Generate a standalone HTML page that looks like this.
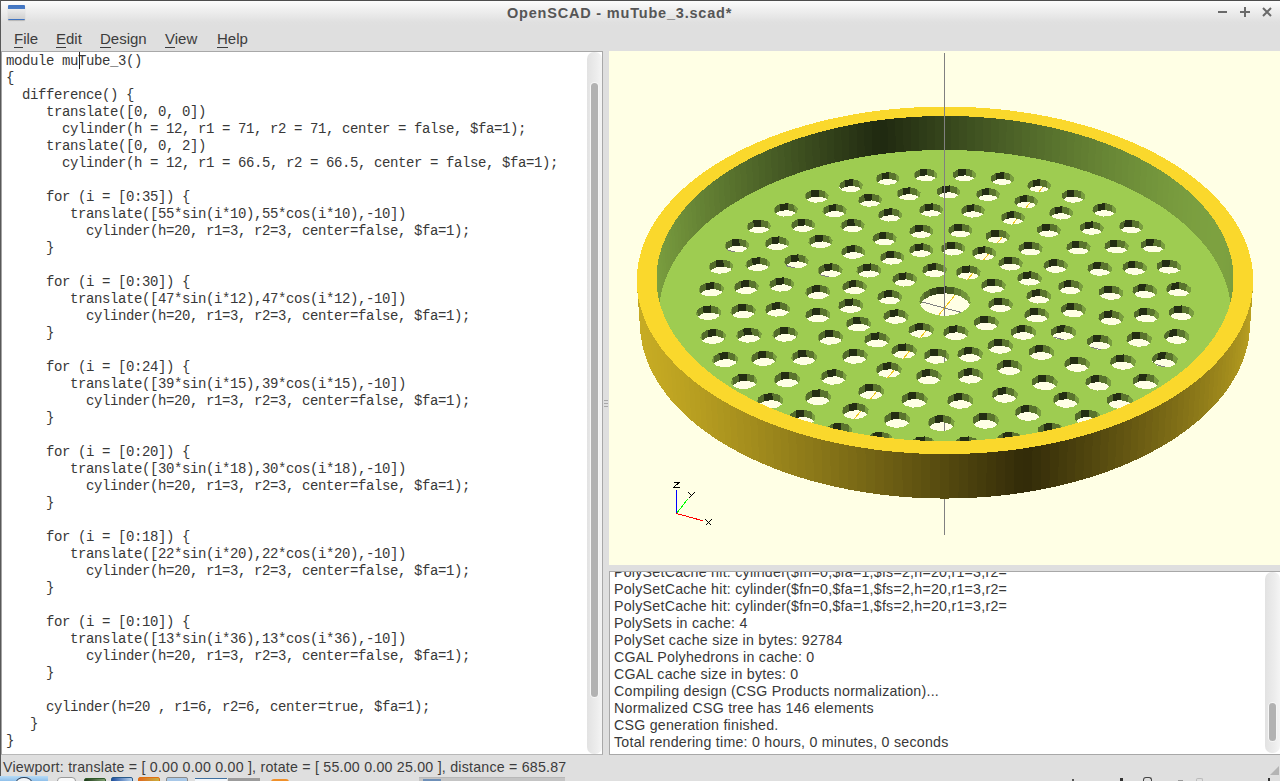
<!DOCTYPE html>
<html><head><meta charset="utf-8">
<style>
*{margin:0;padding:0;box-sizing:border-box}
html,body{width:1280px;height:781px;overflow:hidden;background:#dfdfdf;font-family:"Liberation Sans",sans-serif;position:relative}
.abs{position:absolute}
#title{left:0;top:0;width:1280px;height:26px;background:linear-gradient(#4e4e4e 0,#4e4e4e 1px,#fdfdfd 1px,#f2f2f2 8px,#e0e0e0 22px,#dfdfdf 26px)}
#ttext{left:507px;top:3px;font-weight:bold;font-size:14.5px;letter-spacing:0.8px;color:#565656;white-space:nowrap;line-height:20px}
#lborder{left:0;top:0;width:1px;height:776px;background:#585858}
.menu{top:30px;font-size:15px;color:#3c3c3c;line-height:18px;white-space:nowrap}
.menu u{text-decoration:none;border-bottom:1px solid #3c3c3c}
#editor{left:1px;top:51px;width:602px;height:704px;background:#fff;border-left:1px solid #a4a4a4;border-top:1px solid #a8a8a8;border-right:1px solid #a8a8a8;border-bottom:1px solid #b8b8b8;overflow:hidden}
#code{left:6px;top:3px;width:580px;font-family:"Liberation Mono",monospace;font-size:14px;letter-spacing:-0.4px;color:#383838}
.cl{position:absolute;left:0;white-space:pre;line-height:17px;height:17px}
#cursor{left:79px;top:52px;width:1px;height:17px;background:#222}
#escroll{left:587px;top:52px;width:15px;height:702px;background:linear-gradient(90deg,#e2e2e2,#ececec 60%,#f4f4f4);border-radius:7px}
#ethumb{left:591px;top:83px;width:7px;height:614px;background:#b2b2b2;border-radius:4px;box-shadow:0 0 0 1px #f6f6f6}
#view{left:609px;top:51px;width:671px;height:514px;background:#ffffe5;overflow:hidden}
#console{left:609px;top:571px;width:680px;height:184px;background:#fff;border:1px solid #a8a8a8;overflow:hidden}
#ctext{left:4px;top:-8px;font-size:14.2px;letter-spacing:0.25px;color:#383838}
.ln{position:absolute;left:0;white-space:nowrap;line-height:17px;height:17px}
#cscroll{left:1265px;top:572px;width:15px;height:181px;background:linear-gradient(90deg,#e2e2e2,#ececec 60%,#f4f4f4);border-radius:7px}
#cthumb{left:1269px;top:703px;width:7px;height:38px;background:#b2b2b2;border-radius:4px;box-shadow:0 0 0 1px #f6f6f6}
#status{left:3px;top:758px;font-size:14.2px;letter-spacing:0.23px;color:#3c3c3c;white-space:nowrap;line-height:18px}
#taskbar{left:0;top:776px;width:1280px;height:5px;background:#dfdfdf}
</style></head><body>
<div id="title" class="abs"></div>
<div class="abs" style="left:8px;top:5px;width:17px;height:15px;border-radius:1px;background:linear-gradient(#3f73c0 0,#4a7cc6 4px,#ececec 4px,#d0d0d0 14px,#3f73c0 14px);box-shadow:0 1px 1px rgba(0,0,0,.2)"></div>
<div id="ttext" class="abs">OpenSCAD - muTube_3.scad*</div>
<svg class="abs" style="left:1210px;top:0" width="70" height="26">
<g fill="#6a6a6a"><rect x="8" y="11" width="9" height="2"/><rect x="30" y="11" width="10" height="2"/><rect x="34" y="7" width="2" height="10"/></g>
<path d="M53 8L61 16M61 8L53 16" stroke="#6a6a6a" stroke-width="2"/>
</svg>
<div class="abs menu" style="left:14px"><u>F</u>ile</div>
<div class="abs menu" style="left:56px"><u>E</u>dit</div>
<div class="abs menu" style="left:100px"><u>D</u>esign</div>
<div class="abs menu" style="left:165px"><u>V</u>iew</div>
<div class="abs menu" style="left:217px"><u>H</u>elp</div>
<div id="editor" class="abs"></div>
<div id="code" class="abs" style="top:53px"><div class="cl" style="top:0px">module muTube_3()</div><div class="cl" style="top:17px">{</div><div class="cl" style="top:34px">  difference() {</div><div class="cl" style="top:51px">     translate([0, 0, 0])</div><div class="cl" style="top:68px">       cylinder(h = 12, r1 = 71, r2 = 71, center = false, $fa=1);</div><div class="cl" style="top:85px">     translate([0, 0, 2])</div><div class="cl" style="top:102px">       cylinder(h = 12, r1 = 66.5, r2 = 66.5, center = false, $fa=1);</div><div class="cl" style="top:119px"></div><div class="cl" style="top:136px">     for (i = [0:35]) {</div><div class="cl" style="top:153px">        translate([55*sin(i*10),55*cos(i*10),-10])</div><div class="cl" style="top:170px">          cylinder(h=20, r1=3, r2=3, center=false, $fa=1);</div><div class="cl" style="top:187px">     }</div><div class="cl" style="top:204px"></div><div class="cl" style="top:221px">     for (i = [0:30]) {</div><div class="cl" style="top:238px">        translate([47*sin(i*12),47*cos(i*12),-10])</div><div class="cl" style="top:255px">          cylinder(h=20, r1=3, r2=3, center=false, $fa=1);</div><div class="cl" style="top:272px">     }</div><div class="cl" style="top:289px"></div><div class="cl" style="top:306px">     for (i = [0:24]) {</div><div class="cl" style="top:323px">        translate([39*sin(i*15),39*cos(i*15),-10])</div><div class="cl" style="top:340px">          cylinder(h=20, r1=3, r2=3, center=false, $fa=1);</div><div class="cl" style="top:357px">     }</div><div class="cl" style="top:374px"></div><div class="cl" style="top:391px">     for (i = [0:20]) {</div><div class="cl" style="top:408px">        translate([30*sin(i*18),30*cos(i*18),-10])</div><div class="cl" style="top:425px">          cylinder(h=20, r1=3, r2=3, center=false, $fa=1);</div><div class="cl" style="top:442px">     }</div><div class="cl" style="top:459px"></div><div class="cl" style="top:476px">     for (i = [0:18]) {</div><div class="cl" style="top:493px">        translate([22*sin(i*20),22*cos(i*20),-10])</div><div class="cl" style="top:510px">          cylinder(h=20, r1=3, r2=3, center=false, $fa=1);</div><div class="cl" style="top:527px">     }</div><div class="cl" style="top:544px"></div><div class="cl" style="top:561px">     for (i = [0:10]) {</div><div class="cl" style="top:578px">        translate([13*sin(i*36),13*cos(i*36),-10])</div><div class="cl" style="top:595px">          cylinder(h=20, r1=3, r2=3, center=false, $fa=1);</div><div class="cl" style="top:612px">     }</div><div class="cl" style="top:629px"></div><div class="cl" style="top:646px">     cylinder(h=20 , r1=6, r2=6, center=true, $fa=1);</div><div class="cl" style="top:663px">   }</div><div class="cl" style="top:680px">}</div></div>
<div id="cursor" class="abs"></div>
<div id="escroll" class="abs"></div>
<div id="ethumb" class="abs"></div>
<div id="view" class="abs"><svg width="671" height="514" viewBox="0 0 671 514"><g shape-rendering="crispEdges"><line x1="78.28" y1="188.20" x2="611.17" y2="330.73" stroke="#808080" stroke-width="1"/><line x1="201.45" y1="421.89" x2="451.02" y2="114.91" stroke="#f2c81e" stroke-width="1"/><line x1="335.50" y1="484.49" x2="335.50" y2="257.00" stroke="#808080" stroke-width="1"/><polygon points="622.0,267.3 622.1,262.4 624.5,226.8 624.4,231.7" fill="#789b3e"/><polygon points="622.1,262.4 621.9,257.4 624.3,221.9 624.5,226.8" fill="#799c3e"/><polygon points="621.9,257.4 621.5,252.5 623.9,217.0 624.3,221.9" fill="#799d3f"/><polygon points="621.5,252.5 620.8,247.6 623.2,212.1 623.9,217.0" fill="#7a9e3f"/><polygon points="620.8,247.6 619.9,242.7 622.3,207.3 623.2,212.1" fill="#7b9f3f"/><polygon points="619.9,242.7 618.7,237.9 621.1,202.5 622.3,207.3" fill="#7b9f40"/><polygon points="618.7,237.9 617.3,233.1 619.6,197.7 621.1,202.5" fill="#7ca040"/><polygon points="617.3,233.1 615.6,228.3 617.9,193.0 619.6,197.7" fill="#7ca040"/><polygon points="615.6,228.3 613.7,223.6 616.0,188.3 617.9,193.0" fill="#7ca140"/><polygon points="613.7,223.6 611.5,218.9 613.8,183.7 616.0,188.3" fill="#7da140"/><polygon points="611.5,218.9 609.1,214.2 611.4,179.1 613.8,183.7" fill="#7da140"/><polygon points="609.1,214.2 606.5,209.6 608.8,174.5 611.4,179.1" fill="#7da140"/><polygon points="606.5,209.6 603.7,205.1 605.9,170.0 608.8,174.5" fill="#7da140"/><polygon points="603.7,205.1 600.6,200.6 602.8,165.6 605.9,170.0" fill="#7da140"/><polygon points="600.6,200.6 597.3,196.2 599.5,161.3 602.8,165.6" fill="#7ca140"/><polygon points="597.3,196.2 593.8,191.9 595.9,157.0 599.5,161.3" fill="#7ca040"/><polygon points="593.8,191.9 590.1,187.6 592.2,152.7 595.9,157.0" fill="#7ca040"/><polygon points="590.1,187.6 586.2,183.4 588.2,148.6 592.2,152.7" fill="#7b9f40"/><polygon points="586.2,183.4 582.0,179.3 584.0,144.5 588.2,148.6" fill="#7b9f3f"/><polygon points="582.0,179.3 577.7,175.3 579.7,140.5 584.0,144.5" fill="#7a9e3f"/><polygon points="577.7,175.3 573.2,171.3 575.1,136.6 579.7,140.5" fill="#799d3f"/><polygon points="573.2,171.3 568.5,167.4 570.4,132.7 575.1,136.6" fill="#799c3e"/><polygon points="568.5,167.4 563.6,163.6 565.5,129.0 570.4,132.7" fill="#789b3e"/><polygon points="563.6,163.6 558.6,159.9 560.4,125.3 565.5,129.0" fill="#779a3d"/><polygon points="558.6,159.9 553.3,156.3 555.1,121.7 560.4,125.3" fill="#76983d"/><polygon points="553.3,156.3 547.9,152.8 549.6,118.2 555.1,121.7" fill="#75973c"/><polygon points="547.9,152.8 542.3,149.4 544.0,114.9 549.6,118.2" fill="#73953c"/><polygon points="542.3,149.4 536.6,146.1 538.2,111.6 544.0,114.9" fill="#72943b"/><polygon points="536.6,146.1 530.7,142.9 532.3,108.4 538.2,111.6" fill="#71923a"/><polygon points="530.7,142.9 524.7,139.7 526.2,105.3 532.3,108.4" fill="#6f9039"/><polygon points="524.7,139.7 518.6,136.7 520.0,102.3 526.2,105.3" fill="#6e8e39"/><polygon points="518.6,136.7 512.3,133.8 513.7,99.4 520.0,102.3" fill="#6c8c38"/><polygon points="512.3,133.8 505.8,131.0 507.2,96.6 513.7,99.4" fill="#6b8a37"/><polygon points="505.8,131.0 499.3,128.3 500.6,94.0 507.2,96.6" fill="#698836"/><polygon points="499.3,128.3 492.6,125.7 493.8,91.4 500.6,94.0" fill="#678635"/><polygon points="492.6,125.7 485.8,123.3 487.0,89.0 493.8,91.4" fill="#668334"/><polygon points="485.8,123.3 478.9,120.9 480.0,86.6 487.0,89.0" fill="#648133"/><polygon points="478.9,120.9 471.9,118.7 472.9,84.4 480.0,86.6" fill="#627e32"/><polygon points="471.9,118.7 464.7,116.5 465.8,82.3 472.9,84.4" fill="#607c31"/><polygon points="464.7,116.5 457.5,114.5 458.5,80.3 465.8,82.3" fill="#5e7930"/><polygon points="457.5,114.5 450.3,112.6 451.2,78.5 458.5,80.3" fill="#5c762f"/><polygon points="450.3,112.6 442.9,110.9 443.7,76.7 451.2,78.5" fill="#59742e"/><polygon points="442.9,110.9 435.4,109.2 436.2,75.1 443.7,76.7" fill="#57712d"/><polygon points="435.4,109.2 427.9,107.7 428.6,73.6 436.2,75.1" fill="#556e2c"/><polygon points="427.9,107.7 420.3,106.3 421.0,72.2 428.6,73.6" fill="#536b2b"/><polygon points="420.3,106.3 412.7,105.0 413.3,70.9 421.0,72.2" fill="#506829"/><polygon points="412.7,105.0 405.0,103.8 405.5,69.7 413.3,70.9" fill="#4e6428"/><polygon points="405.0,103.8 397.2,102.8 397.7,68.7 405.5,69.7" fill="#4b6127"/><polygon points="397.2,102.8 389.4,101.9 389.8,67.8 397.7,68.7" fill="#495e26"/><polygon points="389.4,101.9 381.6,101.1 382.0,67.0 389.8,67.8" fill="#465b24"/><polygon points="381.6,101.1 373.7,100.4 374.0,66.4 382.0,67.0" fill="#445723"/><polygon points="373.7,100.4 365.8,99.9 366.1,65.8 374.0,66.4" fill="#415422"/><polygon points="365.8,99.9 357.9,99.5 358.1,65.4 366.1,65.8" fill="#3e5120"/><polygon points="357.9,99.5 350.0,99.2 350.1,65.1 358.1,65.4" fill="#3c4d1f"/><polygon points="350.0,99.2 342.1,99.0 342.1,65.0 350.1,65.1" fill="#394a1d"/><polygon points="342.1,99.0 334.1,99.0 334.1,64.9 342.1,65.0" fill="#36461c"/><polygon points="334.1,99.0 326.2,99.1 326.1,65.0 334.1,64.9" fill="#34431b"/><polygon points="326.2,99.1 318.3,99.3 318.1,65.3 326.1,65.0" fill="#313f19"/><polygon points="318.3,99.3 310.3,99.6 310.1,65.6 318.1,65.3" fill="#2e3c18"/><polygon points="310.3,99.6 302.4,100.1 302.2,66.1 310.1,65.6" fill="#2b3816"/><polygon points="302.4,100.1 294.6,100.7 294.2,66.7 302.2,66.1" fill="#293415"/><polygon points="294.6,100.7 286.7,101.4 286.3,67.4 294.2,66.7" fill="#263113"/><polygon points="286.7,101.4 278.9,102.3 278.4,68.2 286.3,67.4" fill="#232d12"/><polygon points="278.9,102.3 271.1,103.2 270.6,69.2 278.4,68.2" fill="#202a11"/><polygon points="271.1,103.2 263.4,104.3 262.8,70.3 270.6,69.2" fill="#212b11"/><polygon points="263.4,104.3 255.7,105.6 255.1,71.5 262.8,70.3" fill="#242f13"/><polygon points="255.7,105.6 248.1,106.9 247.4,72.8 255.1,71.5" fill="#273214"/><polygon points="248.1,106.9 240.5,108.4 239.8,74.3 247.4,72.8" fill="#2a3616"/><polygon points="240.5,108.4 233.0,110.0 232.2,75.8 239.8,74.3" fill="#2d3a17"/><polygon points="233.0,110.0 225.6,111.7 224.8,77.5 232.2,75.8" fill="#2f3d18"/><polygon points="225.6,111.7 218.3,113.5 217.4,79.3 224.8,77.5" fill="#32411a"/><polygon points="218.3,113.5 211.0,115.4 210.1,81.3 217.4,79.3" fill="#35441b"/><polygon points="211.0,115.4 203.9,117.5 202.8,83.3 210.1,81.3" fill="#38481d"/><polygon points="203.9,117.5 196.8,119.7 195.7,85.5 202.8,83.3" fill="#3a4b1e"/><polygon points="196.8,119.7 189.9,122.0 188.7,87.7 195.7,85.5" fill="#3d4f1f"/><polygon points="189.9,122.0 183.0,124.4 181.8,90.1 188.7,87.7" fill="#405221"/><polygon points="183.0,124.4 176.3,126.9 175.0,92.6 181.8,90.1" fill="#425622"/><polygon points="176.3,126.9 169.6,129.6 168.3,95.2 175.0,92.6" fill="#455924"/><polygon points="169.6,129.6 163.1,132.3 161.8,97.9 168.3,95.2" fill="#475c25"/><polygon points="163.1,132.3 156.8,135.2 155.3,100.8 161.8,97.9" fill="#4a6026"/><polygon points="156.8,135.2 150.5,138.1 149.0,103.7 155.3,100.8" fill="#4c6327"/><polygon points="150.5,138.1 144.4,141.2 142.9,106.7 149.0,103.7" fill="#4f6629"/><polygon points="144.4,141.2 138.5,144.4 136.9,109.9 142.9,106.7" fill="#51692a"/><polygon points="138.5,144.4 132.7,147.6 131.0,113.1 136.9,109.9" fill="#546c2b"/><polygon points="132.7,147.6 127.0,151.0 125.3,116.4 131.0,113.1" fill="#566f2c"/><polygon points="127.0,151.0 121.5,154.5 119.8,119.9 125.3,116.4" fill="#58722d"/><polygon points="121.5,154.5 116.2,158.0 114.4,123.4 119.8,119.9" fill="#5a752f"/><polygon points="116.2,158.0 111.0,161.7 109.2,127.0 114.4,123.4" fill="#5c7830"/><polygon points="111.0,161.7 106.1,165.4 104.2,130.7 109.2,127.0" fill="#5f7a31"/><polygon points="106.1,165.4 101.3,169.3 99.3,134.5 104.2,130.7" fill="#617d32"/><polygon points="101.3,169.3 96.6,173.2 94.7,138.4 99.3,134.5" fill="#637f33"/><polygon points="96.6,173.2 92.2,177.2 90.2,142.4 94.7,138.4" fill="#648234"/><polygon points="92.2,177.2 88.0,181.3 86.0,146.4 90.2,142.4" fill="#668435"/><polygon points="88.0,181.3 84.0,185.4 81.9,150.5 86.0,146.4" fill="#688736"/><polygon points="84.0,185.4 80.1,189.6 78.0,154.7 81.9,150.5" fill="#6a8937"/><polygon points="80.1,189.6 76.5,193.9 74.4,159.0 78.0,154.7" fill="#6c8b37"/><polygon points="76.5,193.9 73.1,198.3 70.9,163.3 74.4,159.0" fill="#6d8d38"/><polygon points="73.1,198.3 69.9,202.8 67.7,167.7 70.9,163.3" fill="#6f8f39"/><polygon points="69.9,202.8 67.0,207.2 64.7,172.2 67.7,167.7" fill="#70913a"/><polygon points="67.0,207.2 64.2,211.8 62.0,176.7 64.7,172.2" fill="#71933b"/><polygon points="64.2,211.8 61.7,216.4 59.4,181.2 62.0,176.7" fill="#73943b"/><polygon points="61.7,216.4 59.4,221.1 57.1,185.9 59.4,181.2" fill="#74963c"/><polygon points="59.4,221.1 57.4,225.8 55.1,190.5 57.1,185.9" fill="#75973c"/><polygon points="57.4,225.8 55.6,230.5 53.2,195.2 55.1,190.5" fill="#76993d"/><polygon points="55.6,230.5 54.0,235.3 51.7,200.0 53.2,195.2" fill="#779a3d"/><polygon points="54.0,235.3 52.7,240.2 50.3,204.8 51.7,200.0" fill="#789b3e"/><polygon points="52.7,240.2 51.6,245.0 49.2,209.6 50.3,204.8" fill="#799c3e"/><polygon points="51.6,245.0 50.8,249.9 48.4,214.4 49.2,209.6" fill="#7a9d3f"/><polygon points="50.8,249.9 50.3,254.8 47.9,219.3 48.4,214.4" fill="#7a9e3f"/><polygon points="50.3,254.8 50.0,259.7 47.5,224.2 47.9,219.3" fill="#7b9f3f"/><polygon points="50.0,259.7 49.9,264.7 47.5,229.1 47.5,224.2" fill="#7ba040"/><polygon points="49.9,264.7 50.1,269.6 47.7,234.0 47.5,229.1" fill="#7ca040"/><path fill-rule="evenodd" fill="#9ecc51" d="M603.5 321.3 606.5 316.5 609.2 311.7 611.7 306.8 613.9 301.9 615.9 297.0 617.6 292.1 619.0 287.1 620.1 282.2 621.0 277.2 621.6 272.3 622.0 267.3 622.1 262.4 621.9 257.4 621.5 252.5 620.8 247.6 619.9 242.7 618.7 237.9 617.3 233.1 615.6 228.3 613.7 223.6 611.5 218.9 609.1 214.2 606.5 209.6 603.7 205.1 600.6 200.6 597.3 196.2 593.8 191.9 590.1 187.6 586.2 183.4 582.0 179.3 577.7 175.3 573.2 171.3 568.5 167.4 563.6 163.6 558.6 159.9 553.3 156.3 547.9 152.8 542.3 149.4 536.6 146.1 530.7 142.9 524.7 139.7 518.6 136.7 512.3 133.8 505.8 131.0 499.3 128.3 492.6 125.7 485.8 123.3 478.9 120.9 471.9 118.7 464.7 116.5 457.5 114.5 450.3 112.6 442.9 110.9 435.4 109.2 427.9 107.7 420.3 106.3 412.7 105.0 405.0 103.8 397.2 102.8 389.4 101.9 381.6 101.1 373.7 100.4 365.8 99.9 357.9 99.5 350.0 99.2 342.1 99.0 334.1 99.0 326.2 99.1 318.3 99.3 310.3 99.6 302.4 100.1 294.6 100.7 286.7 101.4 278.9 102.3 271.1 103.2 263.4 104.3 255.7 105.6 248.1 106.9 240.5 108.4 233.0 110.0 225.6 111.7 218.3 113.5 211.0 115.4 203.9 117.5 196.8 119.7 189.9 122.0 183.0 124.4 176.3 126.9 169.6 129.6 163.1 132.3 156.8 135.2 150.5 138.1 144.4 141.2 138.5 144.4 132.7 147.6 127.0 151.0 121.5 154.5 116.2 158.0 111.0 161.7 106.1 165.4 101.3 169.3 96.6 173.2 92.2 177.2 88.0 181.3 84.0 185.4 80.1 189.6 76.5 193.9 73.1 198.3 69.9 202.8 67.0 207.2 64.2 211.8 61.7 216.4 59.4 221.1 57.4 225.8 55.6 230.5 54.0 235.3 52.7 240.2 51.6 245.0 50.8 249.9 50.3 254.8 50.0 259.7 49.9 264.7 50.1 269.6 50.6 274.6 51.4 279.6 52.4 284.5 53.7 289.5 55.2 294.4 57.0 299.3 59.1 304.2 61.4 309.1 64.0 313.9 66.9 318.7 70.1 323.5 73.5 328.2 77.1 332.9 81.1 337.5 85.2 342.0 89.7 346.5 94.4 350.9 99.3 355.2 104.5 359.4 109.9 363.6 115.6 367.6 121.5 371.6 127.6 375.4 134.0 379.2 140.5 382.8 147.3 386.3 154.3 389.7 161.4 393.0 168.8 396.1 176.3 399.2 184.0 402.0 191.9 404.8 200.0 407.3 208.2 409.8 216.5 412.1 225.0 414.2 233.6 416.2 242.3 418.0 251.1 419.7 260.0 421.2 269.0 422.5 278.1 423.7 287.2 424.7 296.4 425.5 305.7 426.2 314.9 426.6 324.2 426.9 333.5 427.1 342.9 427.0 352.2 426.8 361.4 426.4 370.7 425.9 379.9 425.1 389.1 424.2 398.2 423.2 407.2 421.9 416.2 420.5 425.1 418.9 433.8 417.2 442.5 415.3 451.0 413.2 459.4 411.0 467.7 408.7 475.8 406.1 483.8 403.5 491.6 400.7 499.3 397.7 506.7 394.7 514.0 391.5 521.1 388.1 527.9 384.7 534.6 381.1 541.1 377.4 547.3 373.6 553.3 369.7 559.1 365.7 564.7 361.6 570.0 357.4 575.0 353.2 579.9 348.8 584.4 344.4 588.8 339.9 592.8 335.3 596.6 330.7 600.2 326.0ZM441.2 137.4 441.9 133.4 438.1 129.9 431.2 128.2 423.9 128.9 418.9 131.9 418.2 135.9 422.0 139.5 428.9 141.2 436.3 140.4ZM475.6 148.0 476.3 143.9 472.4 140.4 465.4 138.6 458.1 139.4 453.1 142.4 452.5 146.4 456.3 150.0 463.3 151.8 470.7 151.0ZM506.8 161.7 507.3 157.6 503.3 154.0 496.3 152.2 488.9 153.0 484.0 156.0 483.4 160.2 487.4 163.8 494.4 165.6 501.8 164.8ZM533.7 178.3 534.2 174.2 530.1 170.5 523.1 168.7 515.6 169.5 510.7 172.6 510.1 176.8 514.2 180.5 521.3 182.3 528.8 181.4ZM555.7 197.5 556.1 193.2 552.0 189.5 544.8 187.7 537.3 188.5 532.3 191.6 531.8 195.9 536.0 199.6 543.2 201.5 550.7 200.6ZM571.8 218.7 572.3 214.3 568.0 210.5 560.8 208.6 553.2 209.5 548.2 212.7 547.7 217.0 551.9 220.9 559.3 222.7 566.9 221.9ZM581.6 241.4 582.0 236.9 577.7 233.0 570.4 231.1 562.7 232.0 557.7 235.2 557.2 239.7 561.5 243.6 568.9 245.5 576.6 244.7ZM584.4 264.9 584.9 260.4 580.5 256.4 573.0 254.4 565.3 255.3 560.3 258.7 559.8 263.2 564.1 267.2 571.6 269.2 579.4 268.3ZM580.0 288.7 580.5 284.0 576.1 279.9 568.5 277.9 560.7 278.8 555.6 282.3 555.1 286.9 559.4 291.1 567.0 293.1 574.9 292.2ZM568.2 311.9 568.7 307.1 564.3 302.9 556.7 300.9 548.8 301.8 543.6 305.3 543.0 310.1 547.4 314.3 555.1 316.3 563.0 315.4ZM549.2 333.7 549.8 328.8 545.3 324.5 537.7 322.5 529.7 323.4 524.4 327.0 523.8 331.9 528.2 336.2 535.9 338.3 543.9 337.3ZM523.4 353.4 524.0 348.4 519.6 344.1 511.9 342.0 503.8 342.9 498.4 346.5 497.8 351.5 502.2 355.9 509.9 358.0 518.1 357.1ZM491.6 370.2 492.2 365.1 487.8 360.7 480.1 358.6 471.9 359.5 466.5 363.2 465.7 368.3 470.1 372.7 477.9 374.9 486.1 373.9ZM454.6 383.4 455.3 378.3 451.0 373.8 443.3 371.7 435.0 372.7 429.5 376.4 428.6 381.5 432.9 386.0 440.7 388.2 449.0 387.2ZM413.8 392.6 414.6 387.4 410.4 382.9 402.6 380.8 394.3 381.7 388.7 385.5 387.7 390.6 392.0 395.2 399.8 397.4 408.1 396.4ZM370.5 397.3 371.5 392.1 367.3 387.6 359.6 385.4 351.3 386.4 345.5 390.2 344.5 395.3 348.6 399.9 356.4 402.1 364.8 401.1ZM326.5 397.3 327.5 392.1 323.4 387.6 315.8 385.4 307.4 386.4 301.6 390.2 300.5 395.3 304.5 399.9 312.2 402.1 320.6 401.1ZM283.2 392.6 284.3 387.4 280.3 382.9 272.7 380.8 264.4 381.7 258.5 385.5 257.3 390.6 261.2 395.2 268.9 397.4 277.3 396.4ZM242.2 383.4 243.5 378.3 239.6 373.8 232.1 371.7 223.7 372.7 217.8 376.4 216.5 381.5 220.3 386.0 227.9 388.2 236.3 387.2ZM205.1 370.2 206.4 365.1 202.7 360.7 195.2 358.6 186.9 359.5 180.9 363.2 179.5 368.3 183.3 372.7 190.8 374.9 199.1 373.9ZM173.1 353.4 174.4 348.4 170.7 344.1 163.4 342.0 155.1 342.9 149.1 346.5 147.7 351.5 151.4 355.9 158.8 358.0 167.1 357.1ZM147.0 333.7 148.5 328.8 144.9 324.5 137.6 322.5 129.4 323.4 123.4 327.0 121.9 331.9 125.5 336.2 132.8 338.3 141.1 337.3ZM127.8 311.9 129.3 307.1 125.7 302.9 118.5 300.9 110.4 301.8 104.5 305.3 103.0 310.1 106.5 314.3 113.7 316.3 121.8 315.4ZM115.7 288.7 117.2 284.0 113.7 279.9 106.7 277.9 98.6 278.8 92.7 282.3 91.2 286.9 94.7 291.1 101.8 293.1 109.8 292.2ZM111.1 264.9 112.5 260.4 109.1 256.4 102.1 254.4 94.2 255.3 88.3 258.7 86.8 263.2 90.2 267.2 97.2 269.2 105.2 268.3ZM113.6 241.4 115.1 236.9 111.7 233.0 104.8 231.1 96.9 232.0 91.1 235.2 89.6 239.7 93.0 243.6 100.0 245.5 107.9 244.7ZM123.1 218.7 124.5 214.3 121.2 210.5 114.3 208.6 106.6 209.5 100.9 212.7 99.4 217.0 102.8 220.9 109.7 222.7 117.4 221.9ZM139.1 197.5 140.4 193.2 137.1 189.5 130.3 187.7 122.6 188.5 117.0 191.6 115.6 195.9 118.9 199.6 125.8 201.5 133.5 200.6ZM160.8 178.3 162.1 174.2 158.7 170.5 152.0 168.7 144.4 169.5 138.9 172.6 137.5 176.8 140.9 180.5 147.7 182.3 155.3 181.4ZM187.6 161.7 188.8 157.6 185.4 154.0 178.7 152.2 171.2 153.0 165.7 156.0 164.5 160.2 167.8 163.8 174.6 165.6 182.1 164.8ZM218.5 148.0 219.7 143.9 216.3 140.4 209.5 138.6 202.1 139.4 196.8 142.4 195.6 146.4 199.0 150.0 205.7 151.8 213.2 151.0ZM252.8 137.4 253.9 133.4 250.4 129.9 243.7 128.2 236.3 128.9 231.1 131.9 229.9 135.9 233.4 139.5 240.1 141.2 247.6 140.4ZM289.5 130.3 290.5 126.3 287.0 122.8 280.3 121.1 272.9 121.9 267.7 124.8 266.7 128.8 270.2 132.3 276.9 134.0 284.3 133.2ZM327.6 126.7 328.6 122.7 325.0 119.2 318.2 117.5 310.9 118.3 305.8 121.2 304.8 125.2 308.4 128.7 315.2 130.4 322.5 129.6ZM366.3 126.7 367.1 122.7 363.5 119.2 356.7 117.5 349.4 118.3 344.3 121.2 343.4 125.2 347.1 128.7 353.9 130.4 361.2 129.6ZM404.5 130.3 405.2 126.3 401.5 122.8 394.7 121.1 387.4 121.9 382.4 124.8 381.6 128.8 385.3 132.3 392.1 134.0 399.4 133.2ZM428.3 153.4 429.0 149.3 425.2 145.8 418.3 144.0 410.9 144.8 405.9 147.8 405.1 151.9 408.9 155.5 415.8 157.3 423.2 156.5ZM463.4 164.8 464.1 160.6 460.2 157.0 453.2 155.3 445.8 156.0 440.8 159.1 440.1 163.2 444.0 166.9 451.0 168.6 458.4 167.8ZM494.2 180.0 494.8 175.8 490.8 172.1 483.7 170.3 476.3 171.1 471.3 174.2 470.6 178.4 474.6 182.1 481.7 183.9 489.2 183.1ZM519.2 198.5 519.8 194.3 515.7 190.5 508.5 188.7 501.0 189.5 496.0 192.7 495.4 196.9 499.5 200.7 506.7 202.5 514.2 201.7ZM537.4 219.8 537.9 215.5 533.8 211.6 526.5 209.8 518.9 210.6 513.9 213.8 513.3 218.2 517.5 222.1 524.8 223.9 532.4 223.1ZM547.7 243.1 548.2 238.6 544.0 234.7 536.7 232.8 529.0 233.6 523.9 236.9 523.4 241.4 527.6 245.3 535.0 247.2 542.7 246.4ZM549.5 267.3 550.0 262.7 545.7 258.7 538.3 256.7 530.5 257.6 525.4 261.0 524.8 265.5 529.1 269.6 536.6 271.5 544.4 270.7ZM542.3 291.4 542.8 286.7 538.5 282.6 531.0 280.6 523.2 281.5 518.0 285.0 517.4 289.6 521.7 293.8 529.2 295.8 537.1 294.9ZM526.2 314.4 526.8 309.6 522.5 305.4 514.9 303.4 506.9 304.3 501.7 307.8 501.0 312.6 505.3 316.8 513.0 318.9 520.9 317.9ZM501.7 335.0 502.3 330.2 498.0 325.9 490.3 323.8 482.3 324.7 476.9 328.3 476.3 333.2 480.6 337.5 488.2 339.6 496.3 338.7ZM469.6 352.3 470.3 347.4 466.0 343.0 458.4 340.9 450.3 341.9 444.8 345.5 444.0 350.5 448.3 354.8 456.0 357.0 464.1 356.0ZM431.5 365.3 432.3 360.3 428.1 355.9 420.4 353.7 412.2 354.7 406.6 358.4 405.8 363.4 410.0 367.8 417.7 370.0 425.9 369.0ZM389.1 373.2 390.0 368.1 385.9 363.7 378.2 361.5 370.0 362.5 364.3 366.2 363.4 371.3 367.5 375.7 375.2 377.9 383.5 376.9ZM344.6 375.5 345.6 370.5 341.6 366.0 333.9 363.9 325.7 364.8 319.9 368.5 318.9 373.6 322.9 378.1 330.6 380.3 338.9 379.3ZM300.3 372.2 301.4 367.2 297.4 362.7 289.9 360.6 281.6 361.6 275.8 365.3 274.6 370.3 278.6 374.8 286.2 376.9 294.5 376.0ZM258.4 363.5 259.6 358.4 255.7 354.0 248.2 351.9 240.0 352.9 234.1 356.6 232.9 361.6 236.7 366.0 244.2 368.1 252.5 367.2ZM221.0 349.7 222.3 344.8 218.5 340.4 211.1 338.3 202.9 339.3 197.0 342.9 195.7 347.9 199.4 352.2 206.9 354.3 215.1 353.4ZM189.9 331.8 191.3 326.9 187.6 322.7 180.3 320.6 172.1 321.5 166.2 325.1 164.8 330.0 168.5 334.3 175.8 336.4 184.0 335.4ZM166.5 310.7 167.9 305.9 164.3 301.7 157.0 299.7 149.0 300.6 143.1 304.1 141.7 308.9 145.2 313.1 152.5 315.1 160.6 314.2ZM151.6 287.4 153.0 282.8 149.4 278.7 142.3 276.7 134.3 277.6 128.5 281.0 127.0 285.7 130.6 289.8 137.7 291.8 145.8 290.9ZM145.6 263.2 147.0 258.6 143.5 254.6 136.5 252.7 128.6 253.6 122.8 256.9 121.4 261.5 124.8 265.5 131.9 267.5 139.9 266.6ZM148.6 239.1 150.0 234.6 146.5 230.7 139.6 228.9 131.7 229.7 126.0 233.0 124.6 237.4 128.1 241.3 135.0 243.3 142.9 242.4ZM160.0 216.1 161.4 211.8 157.9 208.0 151.0 206.1 143.3 207.0 137.7 210.1 136.3 214.5 139.7 218.3 146.6 220.2 154.4 219.4ZM179.2 195.2 180.5 191.0 177.0 187.2 170.2 185.4 162.6 186.2 157.0 189.4 155.7 193.6 159.1 197.4 166.0 199.2 173.7 198.4ZM205.1 177.2 206.3 173.0 202.8 169.3 196.0 167.6 188.5 168.4 183.0 171.4 181.8 175.6 185.2 179.3 192.0 181.1 199.6 180.3ZM236.5 162.6 237.6 158.5 234.1 154.9 227.4 153.1 219.9 153.9 214.5 156.9 213.3 161.0 216.8 164.7 223.6 166.4 231.1 165.6ZM272.1 152.0 273.2 147.9 269.6 144.3 262.9 142.6 255.4 143.3 250.2 146.3 249.1 150.4 252.6 154.0 259.4 155.8 266.8 155.0ZM310.6 145.6 311.5 141.5 307.9 138.0 301.2 136.3 293.8 137.0 288.6 140.0 287.6 144.1 291.1 147.6 297.9 149.4 305.4 148.6ZM350.4 143.7 351.3 139.7 347.6 136.1 340.8 134.4 333.4 135.2 328.3 138.1 327.4 142.2 331.0 145.7 337.9 147.5 345.3 146.7ZM390.1 146.3 390.9 142.3 387.2 138.7 380.3 137.0 373.0 137.8 367.9 140.8 367.0 144.8 370.8 148.4 377.6 150.1 385.0 149.3ZM415.1 169.7 415.9 165.6 412.0 161.9 405.1 160.1 397.6 160.9 392.5 164.0 391.7 168.1 395.5 171.8 402.5 173.6 410.0 172.8ZM451.2 182.2 451.9 178.0 448.0 174.3 440.9 172.5 433.5 173.3 428.4 176.4 427.7 180.6 431.6 184.3 438.6 186.1 446.2 185.3ZM481.0 199.5 481.6 195.2 477.6 191.5 470.5 189.7 463.0 190.5 457.9 193.6 457.2 197.9 461.2 201.7 468.4 203.5 475.9 202.7ZM502.4 220.8 503.0 216.4 498.9 212.6 491.7 210.7 484.1 211.6 479.0 214.8 478.4 219.2 482.4 223.0 489.7 224.9 497.3 224.0ZM513.8 244.8 514.4 240.3 510.2 236.4 502.9 234.5 495.2 235.3 490.1 238.6 489.5 243.1 493.6 247.0 501.0 248.9 508.7 248.1ZM514.1 269.9 514.7 265.3 510.4 261.3 503.0 259.3 495.3 260.2 490.1 263.6 489.4 268.1 493.6 272.2 501.1 274.2 508.9 273.3ZM502.8 294.4 503.4 289.7 499.1 285.6 491.7 283.6 483.8 284.5 478.5 288.0 477.8 292.7 482.1 296.8 489.6 298.8 497.5 297.9ZM480.3 316.6 481.0 311.8 476.7 307.6 469.2 305.6 461.2 306.5 455.9 310.0 455.1 314.8 459.4 319.1 466.9 321.1 475.0 320.2ZM448.0 334.8 448.8 329.9 444.6 325.6 437.0 323.5 429.0 324.5 423.5 328.0 422.7 332.9 426.9 337.2 434.5 339.3 442.6 338.4ZM408.1 347.3 409.0 342.4 404.8 338.1 397.2 336.0 389.1 336.9 383.6 340.5 382.7 345.5 386.8 349.8 394.4 351.9 402.6 351.0ZM363.6 353.3 364.5 348.3 360.4 344.0 352.9 341.9 344.7 342.8 339.1 346.4 338.0 351.4 342.1 355.8 349.7 357.9 357.9 357.0ZM317.8 352.1 318.8 347.1 314.8 342.8 307.3 340.7 299.1 341.6 293.4 345.2 292.3 350.2 296.3 354.6 303.8 356.7 312.0 355.7ZM274.3 343.8 275.4 338.9 271.5 334.6 264.1 332.5 255.9 333.5 250.2 337.1 248.9 342.0 252.8 346.3 260.3 348.4 268.5 347.5ZM236.4 329.3 237.7 324.4 233.9 320.2 226.5 318.1 218.4 319.0 212.6 322.6 211.3 327.4 215.1 331.7 222.5 333.8 230.6 332.9ZM207.0 309.6 208.3 304.8 204.6 300.7 197.3 298.6 189.3 299.5 183.5 303.0 182.1 307.8 185.8 312.0 193.1 314.1 201.2 313.1ZM187.9 286.4 189.2 281.8 185.6 277.7 178.5 275.7 170.5 276.6 164.7 280.0 163.3 284.7 166.9 288.8 174.1 290.8 182.1 289.9ZM180.2 261.5 181.5 256.9 177.9 252.9 170.9 251.0 163.0 251.9 157.3 255.2 155.9 259.8 159.4 263.8 166.5 265.7 174.5 264.8ZM184.0 236.6 185.2 232.1 181.7 228.2 174.7 226.3 167.0 227.2 161.3 230.5 160.0 234.9 163.5 238.8 170.5 240.7 178.3 239.9ZM198.6 213.3 199.8 209.0 196.3 205.2 189.4 203.4 181.7 204.2 176.2 207.4 174.9 211.7 178.3 215.5 185.3 217.4 193.0 216.6ZM222.8 193.2 223.9 189.0 220.4 185.3 213.6 183.5 206.0 184.3 200.5 187.4 199.3 191.6 202.8 195.4 209.7 197.2 217.3 196.4ZM254.7 177.4 255.8 173.2 252.3 169.6 245.4 167.8 237.9 168.6 232.5 171.7 231.4 175.8 234.9 179.5 241.8 181.3 249.3 180.5ZM292.3 166.8 293.3 162.6 289.7 159.0 282.9 157.2 275.4 158.0 270.1 161.1 269.1 165.2 272.6 168.9 279.5 170.6 287.0 169.8ZM333.2 161.8 334.1 157.7 330.5 154.1 323.6 152.3 316.2 153.1 311.0 156.1 310.0 160.2 313.6 163.9 320.5 165.7 328.0 164.9ZM375.0 162.8 375.8 158.7 372.1 155.1 365.2 153.3 357.7 154.1 352.6 157.1 351.7 161.2 355.4 164.9 362.4 166.7 369.8 165.9ZM400.0 188.3 400.8 184.1 397.0 180.4 390.0 178.6 382.5 179.4 377.3 182.5 376.5 186.7 380.3 190.5 387.3 192.3 394.9 191.5ZM433.0 200.5 433.7 196.2 429.8 192.5 422.7 190.7 415.2 191.5 410.0 194.6 409.2 198.9 413.1 202.7 420.3 204.5 427.9 203.7ZM458.2 217.9 458.9 213.6 454.9 209.7 447.7 207.9 440.1 208.7 435.0 211.9 434.3 216.3 438.2 220.1 445.4 222.0 453.1 221.2ZM473.2 239.1 473.9 234.7 469.8 230.7 462.5 228.9 454.9 229.7 449.7 233.0 449.0 237.4 453.0 241.4 460.3 243.3 468.0 242.4ZM476.2 262.1 476.8 257.6 472.7 253.6 465.4 251.6 457.6 252.5 452.4 255.8 451.6 260.4 455.8 264.4 463.1 266.4 470.9 265.5ZM466.4 284.7 467.1 280.1 463.0 276.0 455.6 274.0 447.7 274.9 442.4 278.3 441.6 283.0 445.8 287.1 453.2 289.1 461.1 288.2ZM444.6 304.7 445.3 299.9 441.2 295.8 433.7 293.7 425.8 294.6 420.4 298.1 419.6 302.9 423.7 307.1 431.2 309.1 439.2 308.2ZM412.6 319.7 413.4 314.9 409.3 310.7 401.8 308.6 393.8 309.5 388.3 313.1 387.4 317.9 391.5 322.1 399.0 324.2 407.1 323.3ZM373.6 328.1 374.5 323.3 370.4 319.0 363.0 317.0 354.9 317.9 349.3 321.5 348.4 326.3 352.4 330.6 359.9 332.7 368.0 331.7ZM331.8 329.0 332.8 324.2 328.9 319.9 321.4 317.8 313.3 318.8 307.7 322.3 306.6 327.2 310.6 331.5 318.0 333.5 326.2 332.6ZM291.8 322.2 292.9 317.4 289.0 313.1 281.6 311.1 273.6 312.0 267.9 315.5 266.7 320.4 270.6 324.6 278.0 326.7 286.1 325.8ZM257.7 308.5 258.9 303.7 255.1 299.6 247.8 297.5 239.8 298.4 234.1 301.9 232.9 306.7 236.6 310.9 243.9 312.9 252.0 312.0ZM233.2 289.5 234.4 284.8 230.7 280.7 223.5 278.7 215.5 279.6 209.8 283.0 208.5 287.7 212.2 291.8 219.5 293.8 227.5 292.9ZM220.4 267.3 221.6 262.7 218.0 258.7 210.9 256.7 203.0 257.6 197.3 261.0 196.0 265.5 199.6 269.6 206.8 271.5 214.7 270.6ZM220.3 244.1 221.5 239.7 217.9 235.7 210.9 233.8 203.1 234.7 197.5 238.0 196.2 242.4 199.8 246.4 206.8 248.3 214.7 247.4ZM232.5 222.4 233.7 218.0 230.1 214.2 223.1 212.3 215.4 213.1 209.8 216.3 208.6 220.7 212.2 224.6 219.2 226.5 226.9 225.6ZM255.4 204.0 256.5 199.7 252.9 195.9 246.0 194.1 238.4 194.9 232.9 198.1 231.8 202.4 235.3 206.2 242.3 208.0 250.0 207.2ZM286.8 190.5 287.8 186.3 284.2 182.6 277.2 180.8 269.7 181.6 264.3 184.7 263.2 188.9 266.8 192.7 273.8 194.5 281.4 193.7ZM323.5 183.1 324.5 178.9 320.8 175.2 313.9 173.5 306.4 174.3 301.1 177.3 300.1 181.6 303.7 185.3 310.7 187.1 318.3 186.3ZM362.4 182.4 363.3 178.2 359.6 174.5 352.6 172.7 345.1 173.5 339.9 176.6 338.9 180.8 342.7 184.5 349.7 186.3 357.2 185.5ZM386.4 205.2 387.2 200.9 383.4 197.1 376.3 195.3 368.8 196.1 363.5 199.3 362.6 203.6 366.5 207.4 373.5 209.2 381.2 208.4ZM413.1 215.5 413.8 211.2 409.9 207.4 402.8 205.5 395.2 206.4 390.0 209.5 389.1 213.9 393.0 217.7 400.2 219.6 407.8 218.8ZM432.2 230.5 433.0 226.1 429.0 222.2 421.8 220.3 414.2 221.2 408.9 224.4 408.1 228.8 412.1 232.7 419.3 234.6 427.0 233.7ZM441.6 248.4 442.3 243.9 438.3 239.9 431.0 238.0 423.3 238.9 418.0 242.2 417.2 246.7 421.2 250.7 428.5 252.6 436.3 251.7ZM439.7 267.2 440.4 262.6 436.3 258.6 429.0 256.7 421.2 257.5 415.9 260.9 415.1 265.5 419.1 269.5 426.5 271.5 434.3 270.6ZM426.4 284.6 427.2 279.9 423.1 275.9 415.8 273.9 407.9 274.8 402.5 278.2 401.7 282.8 405.7 286.9 413.2 288.9 421.1 288.0ZM403.3 298.4 404.2 293.7 400.1 289.5 392.7 287.5 384.8 288.4 379.3 291.9 378.4 296.6 382.5 300.8 389.9 302.8 397.9 301.9ZM373.1 306.7 374.0 301.9 370.0 297.8 362.6 295.8 354.6 296.7 349.1 300.2 348.1 304.9 352.1 309.1 359.5 311.1 367.6 310.2ZM339.5 308.4 340.5 303.7 336.6 299.5 329.2 297.5 321.2 298.4 315.6 301.9 314.6 306.6 318.5 310.8 325.9 312.9 334.0 311.9ZM307.1 303.3 308.1 298.6 304.2 294.4 296.9 292.4 288.9 293.3 283.3 296.8 282.2 301.5 286.0 305.7 293.4 307.7 301.4 306.8ZM279.8 292.1 280.9 287.4 277.1 283.3 269.9 281.3 261.9 282.2 256.3 285.6 255.1 290.3 258.9 294.4 266.2 296.4 274.2 295.5ZM261.2 276.2 262.4 271.6 258.6 267.5 251.4 265.6 243.5 266.5 237.9 269.8 236.7 274.5 240.4 278.5 247.6 280.5 255.6 279.6ZM253.4 257.8 254.5 253.3 250.8 249.3 243.7 247.4 235.9 248.2 230.3 251.6 229.1 256.1 232.7 260.1 239.9 262.0 247.8 261.2ZM256.9 239.2 258.1 234.7 254.4 230.8 247.4 228.9 239.6 229.8 234.1 233.0 232.9 237.5 236.5 241.4 243.6 243.3 251.4 242.5ZM271.3 222.5 272.4 218.1 268.7 214.3 261.7 212.4 254.0 213.3 248.5 216.5 247.4 220.9 251.0 224.7 258.0 226.6 265.8 225.8ZM294.4 209.7 295.4 205.4 291.7 201.6 284.7 199.8 277.1 200.6 271.7 203.8 270.6 208.1 274.3 211.9 281.3 213.7 289.0 212.9ZM323.5 202.1 324.5 197.8 320.8 194.1 313.8 192.3 306.2 193.1 300.9 196.2 299.8 200.5 303.5 204.3 310.6 206.1 318.2 205.3ZM355.4 200.6 356.3 196.3 352.5 192.5 345.5 190.7 337.9 191.5 332.7 194.7 331.7 199.0 335.5 202.7 342.5 204.6 350.1 203.7ZM370.8 224.5 371.7 220.1 367.8 216.3 360.7 214.4 353.0 215.3 347.7 218.5 346.8 222.9 350.6 226.7 357.8 228.6 365.5 227.8ZM396.1 237.7 396.9 233.3 393.0 229.4 385.8 227.5 378.1 228.3 372.8 231.6 371.9 236.0 375.8 240.0 383.0 241.9 390.8 241.0ZM403.2 257.0 404.0 252.5 400.1 248.5 392.8 246.6 385.0 247.4 379.7 250.8 378.8 255.3 382.8 259.3 390.1 261.2 397.9 260.3ZM389.1 275.1 389.9 270.5 385.9 266.5 378.6 264.5 370.8 265.4 365.4 268.8 364.5 273.4 368.4 277.4 375.8 279.4 383.7 278.5ZM358.7 285.0 359.6 280.3 355.7 276.2 348.3 274.2 340.5 275.1 335.0 278.5 334.0 283.2 337.9 287.3 345.2 289.3 353.2 288.4ZM323.9 282.5 324.9 277.8 321.0 273.8 313.8 271.8 305.9 272.7 300.3 276.1 299.3 280.7 303.1 284.8 310.4 286.8 318.4 285.9ZM298.6 268.7 299.6 264.1 295.8 260.1 288.6 258.2 280.8 259.0 275.2 262.4 274.1 267.0 277.9 271.0 285.1 273.0 293.0 272.1ZM292.3 249.2 293.4 244.7 289.6 240.8 282.5 238.9 274.7 239.7 269.2 243.0 268.1 247.5 271.8 251.5 279.0 253.4 286.8 252.5ZM307.1 231.5 308.2 227.1 304.4 223.2 297.3 221.3 289.6 222.2 284.2 225.4 283.1 229.8 286.8 233.7 294.0 235.6 301.7 234.8ZM337.0 222.2 338.0 217.8 334.2 214.0 327.1 212.1 319.4 212.9 314.1 216.2 313.1 220.5 316.8 224.4 323.9 226.3 331.7 225.4ZM359.4 256.2 361.6 251.5 361.0 246.7 357.8 242.2 352.2 238.6 344.9 236.3 336.6 235.4 328.3 236.1 320.8 238.2 314.9 241.7 311.3 246.0 310.3 250.9 312.1 255.6 316.6 259.7 323.2 262.8 331.1 264.5 339.7 264.6 347.8 263.2 354.6 260.2Z"/><polygon points="437.9,136.7 439.7,138.3 441.2,137.4 441.9,133.4 438.1,129.9" fill="#799d3f"/><polygon points="431.1,135.0 437.9,136.7 438.1,129.9 431.2,128.2" fill="#5a742e"/><polygon points="423.8,135.7 431.1,135.0 431.2,128.2 423.9,128.9" fill="#242e13"/><polygon points="423.8,135.7 423.9,128.9 418.9,131.9 418.9,136.5 420.3,137.8" fill="#536b2b"/><polygon points="418.2,135.9 418.9,136.5 418.9,131.9" fill="#77993d"/><polygon points="472.1,147.2 474.1,148.9 475.6,148.0 476.3,143.9 472.4,140.4" fill="#799d3f"/><polygon points="465.2,145.5 472.1,147.2 472.4,140.4 465.4,138.6" fill="#5a742e"/><polygon points="457.9,146.2 465.2,145.5 465.4,138.6 458.1,139.4" fill="#242e13"/><polygon points="457.9,146.2 458.1,139.4 453.1,142.4 453.0,147.0 454.5,148.3" fill="#536b2b"/><polygon points="452.5,146.4 453.0,147.0 453.1,142.4" fill="#77993d"/><polygon points="503.1,160.8 505.1,162.7 506.8,161.7 507.3,157.6 503.3,154.0" fill="#799d3f"/><polygon points="496.1,159.1 503.1,160.8 503.3,154.0 496.3,152.2" fill="#5a742e"/><polygon points="488.7,159.9 496.1,159.1 496.3,152.2 488.9,153.0" fill="#242e13"/><polygon points="488.7,159.9 488.9,153.0 484.0,156.0 483.9,160.6 485.3,161.9" fill="#536b2b"/><polygon points="483.4,160.2 483.9,160.6 484.0,156.0" fill="#77993d"/><polygon points="529.8,177.4 532.1,179.4 533.7,178.3 534.2,174.2 530.1,170.5" fill="#799d3f"/><polygon points="522.7,175.6 529.8,177.4 530.1,170.5 523.1,168.7" fill="#5a742e"/><polygon points="515.3,176.4 522.7,175.6 523.1,168.7 515.6,169.5" fill="#242e13"/><polygon points="515.3,176.4 515.6,169.5 510.7,172.6 510.5,177.1 512.0,178.5" fill="#536b2b"/><polygon points="510.1,176.8 510.5,177.1 510.7,172.6" fill="#77993d"/><polygon points="551.6,196.4 554.0,198.5 555.7,197.5 556.1,193.2 552.0,189.5" fill="#799d3f"/><polygon points="544.4,194.6 551.6,196.4 552.0,189.5 544.8,187.7" fill="#5a742e"/><polygon points="537.0,195.4 544.4,194.6 544.8,187.7 537.3,188.5" fill="#242e13"/><polygon points="537.0,195.4 537.3,188.5 532.3,191.6 532.1,196.2 533.6,197.5" fill="#536b2b"/><polygon points="531.8,195.9 532.1,196.2 532.3,191.6" fill="#77993d"/><polygon points="567.7,217.4 570.2,219.7 571.8,218.7 572.3,214.3 568.0,210.5" fill="#799d3f"/><polygon points="560.4,215.6 567.7,217.4 568.0,210.5 560.8,208.6" fill="#5a742e"/><polygon points="552.9,216.4 560.4,215.6 560.8,208.6 553.2,209.5" fill="#242e13"/><polygon points="552.9,216.4 553.2,209.5 548.2,212.7 548.0,217.3 549.5,218.6" fill="#536b2b"/><polygon points="547.7,217.0 548.0,217.3 548.2,212.7" fill="#77993d"/><polygon points="577.3,240.0 580.0,242.4 581.6,241.4 582.0,236.9 577.7,233.0" fill="#799d3f"/><polygon points="570.0,238.1 577.3,240.0 577.7,233.0 570.4,231.1" fill="#5a742e"/><polygon points="562.3,238.9 570.0,238.1 570.4,231.1 562.7,232.0" fill="#242e13"/><polygon points="562.3,238.9 562.7,232.0 557.7,235.2 557.5,239.9 558.9,241.2" fill="#536b2b"/><polygon points="557.2,239.7 557.5,239.9 557.7,235.2" fill="#77993d"/><polygon points="580.1,263.4 582.9,266.0 584.4,264.9 584.9,260.4 580.5,256.4" fill="#799d3f"/><polygon points="572.7,261.5 580.1,263.4 580.5,256.4 573.0,254.4" fill="#5a742e"/><polygon points="564.9,262.3 572.7,261.5 573.0,254.4 565.3,255.3" fill="#242e13"/><polygon points="564.9,262.3 565.3,255.3 560.3,258.7 560.0,263.4 561.4,264.7" fill="#536b2b"/><polygon points="559.8,263.2 560.0,263.4 560.3,258.7" fill="#77993d"/><polygon points="575.7,287.0 578.5,289.7 580.0,288.7 580.5,284.0 576.1,279.9" fill="#799d3f"/><polygon points="568.1,285.0 575.7,287.0 576.1,279.9 568.5,277.9" fill="#5a742e"/><polygon points="560.3,285.9 568.1,285.0 568.5,277.9 560.7,278.8" fill="#242e13"/><polygon points="560.3,285.9 560.7,278.8 555.6,282.3 555.3,287.2 556.6,288.4" fill="#536b2b"/><polygon points="555.1,286.9 555.3,287.2 555.6,282.3" fill="#77993d"/><polygon points="563.9,310.0 566.8,312.8 568.2,311.9 568.7,307.1 564.3,302.9" fill="#799d3f"/><polygon points="556.3,308.0 563.9,310.0 564.3,302.9 556.7,300.9" fill="#5a742e"/><polygon points="548.4,308.9 556.3,308.0 556.7,300.9 548.8,301.8" fill="#242e13"/><polygon points="548.4,308.9 548.8,301.8 543.6,305.3 543.3,310.3 544.5,311.5" fill="#536b2b"/><polygon points="543.0,310.1 543.3,310.3 543.6,305.3" fill="#77993d"/><polygon points="545.0,331.7 547.9,334.6 549.2,333.7 549.8,328.8 545.3,324.5" fill="#799d3f"/><polygon points="537.3,329.6 545.0,331.7 545.3,324.5 537.7,322.5" fill="#5a742e"/><polygon points="529.3,330.6 537.3,329.6 537.7,322.5 529.7,323.4" fill="#242e13"/><polygon points="529.3,330.6 529.7,323.4 524.4,327.0 524.1,332.2 525.3,333.3" fill="#536b2b"/><polygon points="523.8,331.9 524.1,332.2 524.4,327.0" fill="#77993d"/><polygon points="519.3,351.2 522.3,354.2 523.4,353.4 524.0,348.4 519.6,344.1" fill="#799d3f"/><polygon points="511.6,349.1 519.3,351.2 519.6,344.1 511.9,342.0" fill="#5a742e"/><polygon points="503.5,350.1 511.6,349.1 511.9,342.0 503.8,342.9" fill="#242e13"/><polygon points="503.5,350.1 503.8,342.9 498.4,346.5 498.2,351.9 499.3,353.0" fill="#536b2b"/><polygon points="497.8,351.5 498.2,351.9 498.4,346.5" fill="#77993d"/><polygon points="487.6,367.9 490.5,370.9 491.6,370.2 492.2,365.1 487.8,360.7" fill="#799d3f"/><polygon points="479.9,365.8 487.6,367.9 487.8,360.7 480.1,358.6" fill="#5a742e"/><polygon points="471.7,366.8 479.9,365.8 480.1,358.6 471.9,359.5" fill="#242e13"/><polygon points="471.7,366.8 471.9,359.5 466.5,363.2 466.3,368.8 467.2,369.8" fill="#536b2b"/><polygon points="465.7,368.3 466.3,368.8 466.5,363.2" fill="#77993d"/><polygon points="450.8,381.1 453.7,384.1 454.6,383.4 455.3,378.3 451.0,373.8" fill="#799d3f"/><polygon points="443.1,378.9 450.8,381.1 451.0,373.8 443.3,371.7" fill="#5a742e"/><polygon points="434.9,379.9 443.1,378.9 443.3,371.7 435.0,372.7" fill="#242e13"/><polygon points="434.9,379.9 435.0,372.7 429.5,376.4 429.3,382.2 430.1,383.1" fill="#536b2b"/><polygon points="428.6,381.5 429.3,382.2 429.5,376.4" fill="#77993d"/><polygon points="410.2,390.2 413.0,393.1 413.8,392.6 414.6,387.4 410.4,382.9" fill="#799d3f"/><polygon points="402.5,388.0 410.2,390.2 410.4,382.9 402.6,380.8" fill="#5a742e"/><polygon points="394.2,389.0 402.5,388.0 402.6,380.8 394.3,381.7" fill="#242e13"/><polygon points="394.2,389.0 394.3,381.7 388.7,385.5 388.6,391.5 389.3,392.3" fill="#536b2b"/><polygon points="387.7,390.6 388.6,391.5 388.7,385.5" fill="#77993d"/><polygon points="367.2,394.8 369.9,397.7 370.5,397.3 371.5,392.1 367.3,387.6" fill="#799d3f"/><polygon points="359.5,392.6 367.2,394.8 367.3,387.6 359.6,385.4" fill="#5a742e"/><polygon points="351.2,393.6 359.5,392.6 359.6,385.4 351.3,386.4" fill="#242e13"/><polygon points="351.2,393.6 351.3,386.4 345.5,390.2 345.5,396.4 346.1,397.0" fill="#536b2b"/><polygon points="344.5,395.3 345.5,396.4 345.5,390.2" fill="#77993d"/><polygon points="323.4,394.8 326.0,397.6 326.5,397.3 327.5,392.1 323.4,387.6" fill="#799d3f"/><polygon points="315.8,392.6 323.4,394.8 323.4,387.6 315.8,385.4" fill="#5a742e"/><polygon points="307.5,393.6 315.8,392.6 315.8,385.4 307.4,386.4" fill="#242e13"/><polygon points="307.5,393.6 307.4,386.4 301.6,390.2 301.6,396.6 302.1,397.1" fill="#536b2b"/><polygon points="300.5,395.3 301.6,396.6 301.6,390.2" fill="#77993d"/><polygon points="280.4,390.2 282.8,392.8 283.2,392.6 284.3,387.4 280.3,382.9" fill="#799d3f"/><polygon points="272.8,388.0 280.4,390.2 280.3,382.9 272.7,380.8" fill="#5a742e"/><polygon points="264.5,389.0 272.8,388.0 272.7,380.8 264.4,381.7" fill="#242e13"/><polygon points="264.5,389.0 264.4,381.7 258.5,385.5 258.6,392.2 258.9,392.6" fill="#536b2b"/><polygon points="257.3,390.6 258.6,392.2 258.5,385.5" fill="#77993d"/><polygon points="239.8,381.1 242.0,383.6 242.2,383.4 243.5,378.3 239.6,373.8" fill="#799d3f"/><polygon points="232.2,378.9 239.8,381.1 239.6,373.8 232.1,371.7" fill="#5a742e"/><polygon points="223.9,379.9 232.2,378.9 232.1,371.7 223.7,372.7" fill="#242e13"/><polygon points="223.9,379.9 223.7,372.7 217.8,376.4 218.0,383.3 218.2,383.5" fill="#536b2b"/><polygon points="216.5,381.5 218.0,383.3 217.8,376.4" fill="#77993d"/><polygon points="202.9,367.9 204.9,370.3 205.1,370.2 206.4,365.1 202.7,360.7" fill="#799d3f"/><polygon points="195.4,365.8 202.9,367.9 202.7,360.7 195.2,358.6" fill="#5a742e"/><polygon points="187.2,366.8 195.4,365.8 195.2,358.6 186.9,359.5" fill="#242e13"/><polygon points="187.2,366.8 186.9,359.5 180.9,363.2 181.2,370.2 181.3,370.4" fill="#536b2b"/><polygon points="179.5,368.3 181.2,370.2 180.9,363.2" fill="#77993d"/><polygon points="171.0,351.2 172.9,353.5 173.1,353.4 174.4,348.4 170.7,344.1" fill="#799d3f"/><polygon points="163.7,349.1 171.0,351.2 170.7,344.1 163.4,342.0" fill="#5a742e"/><polygon points="155.5,350.1 163.7,349.1 163.4,342.0 155.1,342.9" fill="#242e13"/><polygon points="155.5,350.1 155.1,342.9 149.1,346.5 149.5,353.6 149.5,353.7" fill="#536b2b"/><polygon points="147.7,351.5 149.5,353.6 149.1,346.5" fill="#77993d"/><polygon points="145.2,331.7 146.9,333.8 147.0,333.7 148.5,328.8 144.9,324.5" fill="#799d3f"/><polygon points="137.9,329.6 145.2,331.7 144.9,324.5 137.6,322.5" fill="#5a742e"/><polygon points="129.8,330.6 137.9,329.6 137.6,322.5 129.4,323.4" fill="#242e13"/><polygon points="129.8,330.6 129.4,323.4 123.4,327.0 123.8,334.1 123.8,334.1" fill="#536b2b"/><polygon points="121.9,331.9 123.8,334.1 123.4,327.0" fill="#77993d"/><polygon points="126.1,310.0 127.7,311.9 127.8,311.9 129.3,307.1 125.7,302.9" fill="#799d3f"/><polygon points="118.9,308.0 126.1,310.0 125.7,302.9 118.5,300.9" fill="#5a742e"/><polygon points="110.8,308.9 118.9,308.0 118.5,300.9 110.4,301.8" fill="#242e13"/><polygon points="110.8,308.9 110.4,301.8 104.5,305.3 104.9,312.4 104.9,312.4" fill="#536b2b"/><polygon points="103.0,310.1 104.9,312.4 104.5,305.3" fill="#77993d"/><polygon points="114.1,287.0 115.6,288.8 115.7,288.7 117.2,284.0 113.7,279.9" fill="#799d3f"/><polygon points="107.0,285.0 114.1,287.0 113.7,279.9 106.7,277.9" fill="#5a742e"/><polygon points="99.0,285.9 107.0,285.0 106.7,277.9 98.6,278.8" fill="#242e13"/><polygon points="99.0,285.9 98.6,278.8 92.7,282.3 93.1,289.2 93.2,289.3" fill="#536b2b"/><polygon points="91.2,286.9 93.1,289.2 92.7,282.3" fill="#77993d"/><polygon points="109.5,263.4 110.9,265.0 111.1,264.9 112.5,260.4 109.1,256.4" fill="#799d3f"/><polygon points="102.5,261.5 109.5,263.4 109.1,256.4 102.1,254.4" fill="#5a742e"/><polygon points="94.6,262.3 102.5,261.5 102.1,254.4 94.2,255.3" fill="#242e13"/><polygon points="94.6,262.3 94.2,255.3 88.3,258.7 88.7,265.5 88.8,265.6" fill="#536b2b"/><polygon points="86.8,263.2 88.7,265.5 88.3,258.7" fill="#77993d"/><polygon points="112.1,240.0 113.4,241.5 113.6,241.4 115.1,236.9 111.7,233.0" fill="#799d3f"/><polygon points="105.1,238.1 112.1,240.0 111.7,233.0 104.8,231.1" fill="#5a742e"/><polygon points="97.3,238.9 105.1,238.1 104.8,231.1 96.9,232.0" fill="#242e13"/><polygon points="97.3,238.9 96.9,232.0 91.1,235.2 91.5,241.9 91.7,242.1" fill="#536b2b"/><polygon points="89.6,239.7 91.5,241.9 91.1,235.2" fill="#77993d"/><polygon points="121.5,217.4 122.8,218.9 123.1,218.7 124.5,214.3 121.2,210.5" fill="#799d3f"/><polygon points="114.7,215.6 121.5,217.4 121.2,210.5 114.3,208.6" fill="#5a742e"/><polygon points="106.9,216.4 114.7,215.6 114.3,208.6 106.6,209.5" fill="#242e13"/><polygon points="106.9,216.4 106.6,209.5 100.9,212.7 101.2,219.1 101.5,219.5" fill="#536b2b"/><polygon points="99.4,217.0 101.2,219.1 100.9,212.7" fill="#77993d"/><polygon points="137.4,196.4 138.6,197.7 139.1,197.5 140.4,193.2 137.1,189.5" fill="#799d3f"/><polygon points="130.6,194.6 137.4,196.4 137.1,189.5 130.3,187.7" fill="#5a742e"/><polygon points="122.9,195.4 130.6,194.6 130.3,187.7 122.6,188.5" fill="#242e13"/><polygon points="122.9,195.4 122.6,188.5 117.0,191.6 117.3,197.8 117.7,198.3" fill="#536b2b"/><polygon points="115.6,195.9 117.3,197.8 117.0,191.6" fill="#77993d"/><polygon points="159.0,177.4 160.2,178.7 160.8,178.3 162.1,174.2 158.7,170.5" fill="#799d3f"/><polygon points="152.3,175.6 159.0,177.4 158.7,170.5 152.0,168.7" fill="#5a742e"/><polygon points="144.7,176.4 152.3,175.6 152.0,168.7 144.4,169.5" fill="#242e13"/><polygon points="144.7,176.4 144.4,169.5 138.9,172.6 139.1,178.6 139.7,179.2" fill="#536b2b"/><polygon points="137.5,176.8 139.1,178.6 138.9,172.6" fill="#77993d"/><polygon points="185.6,160.8 186.8,162.1 187.6,161.7 188.8,157.6 185.4,154.0" fill="#799d3f"/><polygon points="178.9,159.1 185.6,160.8 185.4,154.0 178.7,152.2" fill="#5a742e"/><polygon points="171.4,159.9 178.9,159.1 178.7,152.2 171.2,153.0" fill="#242e13"/><polygon points="171.4,159.9 171.2,153.0 165.7,156.0 166.0,161.8 166.7,162.5" fill="#536b2b"/><polygon points="164.5,160.2 166.0,161.8 165.7,156.0" fill="#77993d"/><polygon points="216.4,147.2 217.7,148.5 218.5,148.0 219.7,143.9 216.3,140.4" fill="#799d3f"/><polygon points="209.7,145.5 216.4,147.2 216.3,140.4 209.5,138.6" fill="#5a742e"/><polygon points="202.3,146.2 209.7,145.5 209.5,138.6 202.1,139.4" fill="#242e13"/><polygon points="202.3,146.2 202.1,139.4 196.8,142.4 196.9,147.9 197.8,148.8" fill="#536b2b"/><polygon points="195.6,146.4 196.9,147.9 196.8,142.4" fill="#77993d"/><polygon points="250.6,136.7 251.8,138.0 252.8,137.4 253.9,133.4 250.4,129.9" fill="#799d3f"/><polygon points="243.9,135.0 250.6,136.7 250.4,129.9 243.7,128.2" fill="#5a742e"/><polygon points="236.5,135.7 243.9,135.0 243.7,128.2 236.3,128.9" fill="#242e13"/><polygon points="236.5,135.7 236.3,128.9 231.1,131.9 231.2,137.2 232.2,138.2" fill="#536b2b"/><polygon points="229.9,135.9 231.2,137.2 231.1,131.9" fill="#77993d"/><polygon points="287.0,129.6 288.4,130.9 289.5,130.3 290.5,126.3 287.0,122.8" fill="#799d3f"/><polygon points="280.4,127.9 287.0,129.6 287.0,122.8 280.3,121.1" fill="#5a742e"/><polygon points="273.0,128.6 280.4,127.9 280.3,121.1 272.9,121.9" fill="#242e13"/><polygon points="273.0,128.6 272.9,121.9 267.7,124.8 267.8,129.9 268.9,131.0" fill="#536b2b"/><polygon points="266.7,128.8 267.8,129.9 267.7,124.8" fill="#77993d"/><polygon points="325.0,126.0 326.4,127.4 327.6,126.7 328.6,122.7 325.0,119.2" fill="#799d3f"/><polygon points="318.3,124.3 325.0,126.0 325.0,119.2 318.2,117.5" fill="#5a742e"/><polygon points="311.0,125.1 318.3,124.3 318.2,117.5 310.9,118.3" fill="#242e13"/><polygon points="311.0,125.1 310.9,118.3 305.8,121.2 305.8,126.2 307.0,127.3" fill="#536b2b"/><polygon points="304.8,125.2 305.8,126.2 305.8,121.2" fill="#77993d"/><polygon points="363.4,126.0 364.9,127.4 366.3,126.7 367.1,122.7 363.5,119.2" fill="#799d3f"/><polygon points="356.7,124.3 363.4,126.0 363.5,119.2 356.7,117.5" fill="#5a742e"/><polygon points="349.4,125.1 356.7,124.3 356.7,117.5 349.4,118.3" fill="#242e13"/><polygon points="349.4,125.1 349.4,118.3 344.3,121.2 344.3,126.0 345.6,127.2" fill="#536b2b"/><polygon points="343.4,125.2 344.3,126.0 344.3,121.2" fill="#77993d"/><polygon points="401.4,129.6 403.0,131.1 404.5,130.3 405.2,126.3 401.5,122.8" fill="#799d3f"/><polygon points="394.6,127.9 401.4,129.6 401.5,122.8 394.7,121.1" fill="#5a742e"/><polygon points="387.3,128.6 394.6,127.9 394.7,121.1 387.4,121.9" fill="#242e13"/><polygon points="387.3,128.6 387.4,121.9 382.4,124.8 382.3,129.5 383.7,130.8" fill="#536b2b"/><polygon points="381.6,128.8 382.3,129.5 382.4,124.8" fill="#77993d"/><polygon points="425.0,152.6 426.8,154.3 428.3,153.4 429.0,149.3 425.2,145.8" fill="#799d3f"/><polygon points="418.1,150.9 425.0,152.6 425.2,145.8 418.3,144.0" fill="#5a742e"/><polygon points="410.8,151.6 418.1,150.9 418.3,144.0 410.9,144.8" fill="#242e13"/><polygon points="410.8,151.6 410.9,144.8 405.9,147.8 405.8,152.6 407.1,153.8" fill="#536b2b"/><polygon points="405.1,151.9 405.8,152.6 405.9,147.8" fill="#77993d"/><polygon points="460.0,163.9 461.9,165.7 463.4,164.8 464.1,160.6 460.2,157.0" fill="#799d3f"/><polygon points="453.0,162.1 460.0,163.9 460.2,157.0 453.2,155.3" fill="#5a742e"/><polygon points="445.6,162.9 453.0,162.1 453.2,155.3 445.8,156.0" fill="#242e13"/><polygon points="445.6,162.9 445.8,156.0 440.8,159.1 440.7,163.8 442.0,165.1" fill="#536b2b"/><polygon points="440.1,163.2 440.7,163.8 440.8,159.1" fill="#77993d"/><polygon points="490.5,179.0 492.6,180.9 494.2,180.0 494.8,175.8 490.8,172.1" fill="#799d3f"/><polygon points="483.5,177.2 490.5,179.0 490.8,172.1 483.7,170.3" fill="#5a742e"/><polygon points="476.0,178.0 483.5,177.2 483.7,170.3 476.3,171.1" fill="#242e13"/><polygon points="476.0,178.0 476.3,171.1 471.3,174.2 471.1,178.8 472.5,180.2" fill="#536b2b"/><polygon points="470.6,178.4 471.1,178.8 471.3,174.2" fill="#77993d"/><polygon points="515.4,197.4 517.7,199.5 519.2,198.5 519.8,194.3 515.7,190.5" fill="#799d3f"/><polygon points="508.3,195.6 515.4,197.4 515.7,190.5 508.5,188.7" fill="#5a742e"/><polygon points="500.8,196.4 508.3,195.6 508.5,188.7 501.0,189.5" fill="#242e13"/><polygon points="500.8,196.4 501.0,189.5 496.0,192.7 495.8,197.3 497.3,198.6" fill="#536b2b"/><polygon points="495.4,196.9 495.8,197.3 496.0,192.7" fill="#77993d"/><polygon points="533.4,218.6 535.9,220.8 537.4,219.8 537.9,215.5 533.8,211.6" fill="#799d3f"/><polygon points="526.2,216.7 533.4,218.6 533.8,211.6 526.5,209.8" fill="#5a742e"/><polygon points="518.6,217.6 526.2,216.7 526.5,209.8 518.9,210.6" fill="#242e13"/><polygon points="518.6,217.6 518.9,210.6 513.9,213.8 513.7,218.5 515.1,219.8" fill="#536b2b"/><polygon points="513.3,218.2 513.7,218.5 513.9,213.8" fill="#77993d"/><polygon points="543.7,241.7 546.2,244.1 547.7,243.1 548.2,238.6 544.0,234.7" fill="#799d3f"/><polygon points="536.3,239.8 543.7,241.7 544.0,234.7 536.7,232.8" fill="#5a742e"/><polygon points="528.7,240.6 536.3,239.8 536.7,232.8 529.0,233.6" fill="#242e13"/><polygon points="528.7,240.6 529.0,233.6 523.9,236.9 523.7,241.7 525.1,243.0" fill="#536b2b"/><polygon points="523.4,241.4 523.7,241.7 523.9,236.9" fill="#77993d"/><polygon points="545.4,265.7 548.0,268.2 549.5,267.3 550.0,262.7 545.7,258.7" fill="#799d3f"/><polygon points="537.9,263.8 545.4,265.7 545.7,258.7 538.3,256.7" fill="#5a742e"/><polygon points="530.2,264.7 537.9,263.8 538.3,256.7 530.5,257.6" fill="#242e13"/><polygon points="530.2,264.7 530.5,257.6 525.4,261.0 525.2,265.9 526.5,267.1" fill="#536b2b"/><polygon points="524.8,265.5 525.2,265.9 525.4,261.0" fill="#77993d"/><polygon points="538.2,289.7 540.9,292.3 542.3,291.4 542.8,286.7 538.5,282.6" fill="#799d3f"/><polygon points="530.7,287.7 538.2,289.7 538.5,282.6 531.0,280.6" fill="#5a742e"/><polygon points="522.9,288.6 530.7,287.7 531.0,280.6 523.2,281.5" fill="#242e13"/><polygon points="522.9,288.6 523.2,281.5 518.0,285.0 517.8,290.0 519.0,291.2" fill="#536b2b"/><polygon points="517.4,289.6 517.8,290.0 518.0,285.0" fill="#77993d"/><polygon points="522.1,312.5 524.9,315.2 526.2,314.4 526.8,309.6 522.5,305.4" fill="#799d3f"/><polygon points="514.6,310.5 522.1,312.5 522.5,305.4 514.9,303.4" fill="#5a742e"/><polygon points="506.7,311.4 514.6,310.5 514.9,303.4 506.9,304.3" fill="#242e13"/><polygon points="506.7,311.4 506.9,304.3 501.7,307.8 501.4,313.0 502.6,314.1" fill="#536b2b"/><polygon points="501.0,312.6 501.4,313.0 501.7,307.8" fill="#77993d"/><polygon points="497.7,333.0 500.5,335.8 501.7,335.0 502.3,330.2 498.0,325.9" fill="#799d3f"/><polygon points="490.1,331.0 497.7,333.0 498.0,325.9 490.3,323.8" fill="#5a742e"/><polygon points="482.1,331.9 490.1,331.0 490.3,323.8 482.3,324.7" fill="#242e13"/><polygon points="482.1,331.9 482.3,324.7 476.9,328.3 476.8,333.7 477.8,334.7" fill="#536b2b"/><polygon points="476.3,333.2 476.8,333.7 476.9,328.3" fill="#77993d"/><polygon points="465.8,350.2 468.6,353.0 469.6,352.3 470.3,347.4 466.0,343.0" fill="#799d3f"/><polygon points="458.2,348.1 465.8,350.2 466.0,343.0 458.4,340.9" fill="#5a742e"/><polygon points="450.1,349.0 458.2,348.1 458.4,340.9 450.3,341.9" fill="#242e13"/><polygon points="450.1,349.0 450.3,341.9 444.8,345.5 444.6,351.1 445.6,352.0" fill="#536b2b"/><polygon points="444.0,350.5 444.6,351.1 444.8,345.5" fill="#77993d"/><polygon points="427.9,363.1 430.6,365.9 431.5,365.3 432.3,360.3 428.1,355.9" fill="#799d3f"/><polygon points="420.2,360.9 427.9,363.1 428.1,355.9 420.4,353.7" fill="#5a742e"/><polygon points="412.1,361.9 420.2,360.9 420.4,353.7 412.2,354.7" fill="#242e13"/><polygon points="412.1,361.9 412.2,354.7 406.6,358.4 406.5,364.2 407.3,365.0" fill="#536b2b"/><polygon points="405.8,363.4 406.5,364.2 406.6,358.4" fill="#77993d"/><polygon points="385.8,370.9 388.4,373.7 389.1,373.2 390.0,368.1 385.9,363.7" fill="#799d3f"/><polygon points="378.1,368.7 385.8,370.9 385.9,363.7 378.2,361.5" fill="#5a742e"/><polygon points="369.9,369.7 378.1,368.7 378.2,361.5 370.0,362.5" fill="#242e13"/><polygon points="369.9,369.7 370.0,362.5 364.3,366.2 364.3,372.2 365.0,373.0" fill="#536b2b"/><polygon points="363.4,371.3 364.3,372.2 364.3,366.2" fill="#77993d"/><polygon points="341.5,373.2 344.0,375.9 344.6,375.5 345.6,370.5 341.6,366.0" fill="#799d3f"/><polygon points="333.9,371.1 341.5,373.2 341.6,366.0 333.9,363.9" fill="#5a742e"/><polygon points="325.7,372.1 333.9,371.1 333.9,363.9 325.7,364.8" fill="#242e13"/><polygon points="325.7,372.1 325.7,364.8 319.9,368.5 320.0,374.8 320.5,375.4" fill="#536b2b"/><polygon points="318.9,373.6 320.0,374.8 319.9,368.5" fill="#77993d"/><polygon points="297.5,370.0 299.8,372.5 300.3,372.2 301.4,367.2 297.4,362.7" fill="#799d3f"/><polygon points="289.9,367.8 297.5,370.0 297.4,362.7 289.9,360.6" fill="#5a742e"/><polygon points="281.7,368.8 289.9,367.8 289.9,360.6 281.6,361.6" fill="#242e13"/><polygon points="281.7,368.8 281.6,361.6 275.8,365.3 275.9,371.7 276.3,372.2" fill="#536b2b"/><polygon points="274.6,370.3 275.9,371.7 275.8,365.3" fill="#77993d"/><polygon points="255.9,361.2 258.0,363.7 258.4,363.5 259.6,358.4 255.7,354.0" fill="#799d3f"/><polygon points="248.4,359.1 255.9,361.2 255.7,354.0 248.2,351.9" fill="#5a742e"/><polygon points="240.2,360.1 248.4,359.1 248.2,351.9 240.0,352.9" fill="#242e13"/><polygon points="240.2,360.1 240.0,352.9 234.1,356.6 234.3,363.2 234.6,363.6" fill="#536b2b"/><polygon points="232.9,361.6 234.3,363.2 234.1,356.6" fill="#77993d"/><polygon points="218.7,347.6 220.7,349.9 221.0,349.7 222.3,344.8 218.5,340.4" fill="#799d3f"/><polygon points="211.3,345.5 218.7,347.6 218.5,340.4 211.1,338.3" fill="#5a742e"/><polygon points="203.1,346.5 211.3,345.5 211.1,338.3 202.9,339.3" fill="#242e13"/><polygon points="203.1,346.5 202.9,339.3 197.0,342.9 197.2,349.7 197.5,350.0" fill="#536b2b"/><polygon points="195.7,347.9 197.2,349.7 197.0,342.9" fill="#77993d"/><polygon points="187.8,329.8 189.7,332.0 189.9,331.8 191.3,326.9 187.6,322.7" fill="#799d3f"/><polygon points="180.5,327.8 187.8,329.8 187.6,322.7 180.3,320.6" fill="#5a742e"/><polygon points="172.4,328.7 180.5,327.8 180.3,320.6 172.1,321.5" fill="#242e13"/><polygon points="172.4,328.7 172.1,321.5 166.2,325.1 166.5,331.9 166.7,332.2" fill="#536b2b"/><polygon points="164.8,330.0 166.5,331.9 166.2,325.1" fill="#77993d"/><polygon points="164.6,308.8 166.3,310.8 166.5,310.7 167.9,305.9 164.3,301.7" fill="#799d3f"/><polygon points="157.3,306.8 164.6,308.8 164.3,301.7 157.0,299.7" fill="#5a742e"/><polygon points="149.3,307.7 157.3,306.8 157.0,299.7 149.0,300.6" fill="#242e13"/><polygon points="149.3,307.7 149.0,300.6 143.1,304.1 143.4,310.9 143.6,311.1" fill="#536b2b"/><polygon points="141.7,308.9 143.4,310.9 143.1,304.1" fill="#77993d"/><polygon points="149.8,285.8 151.3,287.6 151.6,287.4 153.0,282.8 149.4,278.7" fill="#799d3f"/><polygon points="142.7,283.8 149.8,285.8 149.4,278.7 142.3,276.7" fill="#5a742e"/><polygon points="134.7,284.7 142.7,283.8 142.3,276.7 134.3,277.6" fill="#242e13"/><polygon points="134.7,284.7 134.3,277.6 128.5,281.0 128.8,287.8 129.0,288.0" fill="#536b2b"/><polygon points="127.0,285.7 128.8,287.8 128.5,281.0" fill="#77993d"/><polygon points="143.9,261.7 145.4,263.4 145.6,263.2 147.0,258.6 143.5,254.6" fill="#799d3f"/><polygon points="136.8,259.8 143.9,261.7 143.5,254.6 136.5,252.7" fill="#5a742e"/><polygon points="129.0,260.6 136.8,259.8 136.5,252.7 128.6,253.6" fill="#242e13"/><polygon points="129.0,260.6 128.6,253.6 122.8,256.9 123.2,263.6 123.4,263.8" fill="#536b2b"/><polygon points="121.4,261.5 123.2,263.6 122.8,256.9" fill="#77993d"/><polygon points="146.8,237.7 148.2,239.3 148.6,239.1 150.0,234.6 146.5,230.7" fill="#799d3f"/><polygon points="139.9,235.8 146.8,237.7 146.5,230.7 139.6,228.9" fill="#5a742e"/><polygon points="132.1,236.7 139.9,235.8 139.6,228.9 131.7,229.7" fill="#242e13"/><polygon points="132.1,236.7 131.7,229.7 126.0,233.0 126.4,239.4 126.7,239.8" fill="#536b2b"/><polygon points="124.6,237.4 126.4,239.4 126.0,233.0" fill="#77993d"/><polygon points="158.2,214.9 159.6,216.4 160.0,216.1 161.4,211.8 157.9,208.0" fill="#799d3f"/><polygon points="151.3,213.1 158.2,214.9 157.9,208.0 151.0,206.1" fill="#5a742e"/><polygon points="143.6,213.9 151.3,213.1 151.0,206.1 143.3,207.0" fill="#242e13"/><polygon points="143.6,213.9 143.3,207.0 137.7,210.1 138.0,216.4 138.4,216.9" fill="#536b2b"/><polygon points="136.3,214.5 138.0,216.4 137.7,210.1" fill="#77993d"/><polygon points="177.3,194.2 178.6,195.6 179.2,195.2 180.5,191.0 177.0,187.2" fill="#799d3f"/><polygon points="170.5,192.3 177.3,194.2 177.0,187.2 170.2,185.4" fill="#5a742e"/><polygon points="162.8,193.2 170.5,192.3 170.2,185.4 162.6,186.2" fill="#242e13"/><polygon points="162.8,193.2 162.6,186.2 157.0,189.4 157.3,195.4 157.8,196.0" fill="#536b2b"/><polygon points="155.7,193.6 157.3,195.4 157.0,189.4" fill="#77993d"/><polygon points="203.0,176.2 204.3,177.6 205.1,177.2 206.3,173.0 202.8,169.3" fill="#799d3f"/><polygon points="196.3,174.4 203.0,176.2 202.8,169.3 196.0,167.6" fill="#5a742e"/><polygon points="188.7,175.2 196.3,174.4 196.0,167.6 188.5,168.4" fill="#242e13"/><polygon points="188.7,175.2 188.5,168.4 183.0,171.4 183.2,177.2 183.9,177.9" fill="#536b2b"/><polygon points="181.8,175.6 183.2,177.2 183.0,171.4" fill="#77993d"/><polygon points="234.3,161.7 235.6,163.1 236.5,162.6 237.6,158.5 234.1,154.9" fill="#799d3f"/><polygon points="227.5,160.0 234.3,161.7 234.1,154.9 227.4,153.1" fill="#5a742e"/><polygon points="220.1,160.7 227.5,160.0 227.4,153.1 219.9,153.9" fill="#242e13"/><polygon points="220.1,160.7 219.9,153.9 214.5,156.9 214.7,162.4 215.5,163.3" fill="#536b2b"/><polygon points="213.3,161.0 214.7,162.4 214.5,156.9" fill="#77993d"/><polygon points="269.7,151.1 271.1,152.5 272.1,152.0 273.2,147.9 269.6,144.3" fill="#799d3f"/><polygon points="263.0,149.4 269.7,151.1 269.6,144.3 262.9,142.6" fill="#5a742e"/><polygon points="255.6,150.2 263.0,149.4 262.9,142.6 255.4,143.3" fill="#242e13"/><polygon points="255.6,150.2 255.4,143.3 250.2,146.3 250.3,151.6 251.2,152.6" fill="#536b2b"/><polygon points="249.1,150.4 250.3,151.6 250.2,146.3" fill="#77993d"/><polygon points="308.0,144.8 309.4,146.2 310.6,145.6 311.5,141.5 307.9,138.0" fill="#799d3f"/><polygon points="301.2,143.1 308.0,144.8 307.9,138.0 301.2,136.3" fill="#5a742e"/><polygon points="293.8,143.9 301.2,143.1 301.2,136.3 293.8,137.0" fill="#242e13"/><polygon points="293.8,143.9 293.8,137.0 288.6,140.0 288.6,145.1 289.7,146.2" fill="#536b2b"/><polygon points="287.6,144.1 288.6,145.1 288.6,140.0" fill="#77993d"/><polygon points="347.6,142.9 349.1,144.4 350.4,143.7 351.3,139.7 347.6,136.1" fill="#799d3f"/><polygon points="340.8,141.2 347.6,142.9 347.6,136.1 340.8,134.4" fill="#5a742e"/><polygon points="333.4,142.0 340.8,141.2 340.8,134.4 333.4,135.2" fill="#242e13"/><polygon points="333.4,142.0 333.4,135.2 328.3,138.1 328.3,143.1 329.5,144.3" fill="#536b2b"/><polygon points="327.4,142.2 328.3,143.1 328.3,138.1" fill="#77993d"/><polygon points="387.1,145.5 388.8,147.1 390.1,146.3 390.9,142.3 387.2,138.7" fill="#799d3f"/><polygon points="380.3,143.8 387.1,145.5 387.2,138.7 380.3,137.0" fill="#5a742e"/><polygon points="372.9,144.6 380.3,143.8 380.3,137.0 373.0,137.8" fill="#242e13"/><polygon points="372.9,144.6 373.0,137.8 367.9,140.8 367.8,145.6 369.1,146.8" fill="#536b2b"/><polygon points="367.0,144.8 367.8,145.6 367.9,140.8" fill="#77993d"/><polygon points="411.9,168.8 413.8,170.5 415.1,169.7 415.9,165.6 412.0,161.9" fill="#799d3f"/><polygon points="405.0,167.0 411.9,168.8 412.0,161.9 405.1,160.1" fill="#5a742e"/><polygon points="397.5,167.8 405.0,167.0 405.1,160.1 397.6,160.9" fill="#242e13"/><polygon points="397.5,167.8 397.6,160.9 392.5,164.0 392.5,168.9 393.8,170.1" fill="#536b2b"/><polygon points="391.7,168.1 392.5,168.9 392.5,164.0" fill="#77993d"/><polygon points="447.8,181.2 449.8,183.0 451.2,182.2 451.9,178.0 448.0,174.3" fill="#799d3f"/><polygon points="440.8,179.4 447.8,181.2 448.0,174.3 440.9,172.5" fill="#5a742e"/><polygon points="433.3,180.2 440.8,179.4 440.9,172.5 433.5,173.3" fill="#242e13"/><polygon points="433.3,180.2 433.5,173.3 428.4,176.4 428.3,181.2 429.6,182.4" fill="#536b2b"/><polygon points="427.7,180.6 428.3,181.2 428.4,176.4" fill="#77993d"/><polygon points="477.4,198.4 479.5,200.4 481.0,199.5 481.6,195.2 477.6,191.5" fill="#799d3f"/><polygon points="470.3,196.6 477.4,198.4 477.6,191.5 470.5,189.7" fill="#5a742e"/><polygon points="462.8,197.4 470.3,196.6 470.5,189.7 463.0,190.5" fill="#242e13"/><polygon points="462.8,197.4 463.0,190.5 457.9,193.6 457.8,198.4 459.1,199.7" fill="#536b2b"/><polygon points="457.2,197.9 457.8,198.4 457.9,193.6" fill="#77993d"/><polygon points="498.6,219.6 501.0,221.7 502.4,220.8 503.0,216.4 498.9,212.6" fill="#799d3f"/><polygon points="491.4,217.7 498.6,219.6 498.9,212.6 491.7,210.7" fill="#5a742e"/><polygon points="483.9,218.5 491.4,217.7 491.7,210.7 484.1,211.6" fill="#242e13"/><polygon points="483.9,218.5 484.1,211.6 479.0,214.8 478.8,219.6 480.2,220.9" fill="#536b2b"/><polygon points="478.4,219.2 478.8,219.6 479.0,214.8" fill="#77993d"/><polygon points="509.9,243.4 512.4,245.7 513.8,244.8 514.4,240.3 510.2,236.4" fill="#799d3f"/><polygon points="502.6,241.5 509.9,243.4 510.2,236.4 502.9,234.5" fill="#5a742e"/><polygon points="495.0,242.3 502.6,241.5 502.9,234.5 495.2,235.3" fill="#242e13"/><polygon points="495.0,242.3 495.2,235.3 490.1,238.6 489.9,243.5 491.2,244.7" fill="#536b2b"/><polygon points="489.5,243.1 489.9,243.5 490.1,238.6" fill="#77993d"/><polygon points="510.1,268.3 512.7,270.8 514.1,269.9 514.7,265.3 510.4,261.3" fill="#799d3f"/><polygon points="502.8,266.4 510.1,268.3 510.4,261.3 503.0,259.3" fill="#5a742e"/><polygon points="495.0,267.2 502.8,266.4 503.0,259.3 495.3,260.2" fill="#242e13"/><polygon points="495.0,267.2 495.3,260.2 490.1,263.6 489.9,268.6 491.1,269.8" fill="#536b2b"/><polygon points="489.4,268.1 489.9,268.6 490.1,263.6" fill="#77993d"/><polygon points="498.9,292.7 501.5,295.3 502.8,294.4 503.4,289.7 499.1,285.6" fill="#799d3f"/><polygon points="491.4,290.7 498.9,292.7 499.1,285.6 491.7,283.6" fill="#5a742e"/><polygon points="483.5,291.6 491.4,290.7 491.7,283.6 483.8,284.5" fill="#242e13"/><polygon points="483.5,291.6 483.8,284.5 478.5,288.0 478.3,293.1 479.5,294.3" fill="#536b2b"/><polygon points="477.8,292.7 478.3,293.1 478.5,288.0" fill="#77993d"/><polygon points="476.5,314.7 479.2,317.4 480.3,316.6 481.0,311.8 476.7,307.6" fill="#799d3f"/><polygon points="469.0,312.7 476.5,314.7 476.7,307.6 469.2,305.6" fill="#5a742e"/><polygon points="461.0,313.6 469.0,312.7 469.2,305.6 461.2,306.5" fill="#242e13"/><polygon points="461.0,313.6 461.2,306.5 455.9,310.0 455.7,315.4 456.8,316.4" fill="#536b2b"/><polygon points="455.1,314.8 455.7,315.4 455.9,310.0" fill="#77993d"/><polygon points="444.4,332.8 447.0,335.4 448.0,334.8 448.8,329.9 444.6,325.6" fill="#799d3f"/><polygon points="436.8,330.7 444.4,332.8 444.6,325.6 437.0,323.5" fill="#5a742e"/><polygon points="428.8,331.6 436.8,330.7 437.0,323.5 429.0,324.5" fill="#242e13"/><polygon points="428.8,331.6 429.0,324.5 423.5,328.0 423.4,333.6 424.3,334.6" fill="#536b2b"/><polygon points="422.7,332.9 423.4,333.6 423.5,328.0" fill="#77993d"/><polygon points="404.7,345.2 407.3,347.9 408.1,347.3 409.0,342.4 404.8,338.1" fill="#799d3f"/><polygon points="397.1,343.1 404.7,345.2 404.8,338.1 397.2,336.0" fill="#5a742e"/><polygon points="389.0,344.1 397.1,343.1 397.2,336.0 389.1,336.9" fill="#242e13"/><polygon points="389.0,344.1 389.1,336.9 383.6,340.5 383.5,346.3 384.3,347.2" fill="#536b2b"/><polygon points="382.7,345.5 383.5,346.3 383.6,340.5" fill="#77993d"/><polygon points="360.4,351.1 362.8,353.8 363.6,353.3 364.5,348.3 360.4,344.0" fill="#799d3f"/><polygon points="352.8,349.0 360.4,351.1 360.4,344.0 352.9,341.9" fill="#5a742e"/><polygon points="344.7,350.0 352.8,349.0 352.9,341.9 344.7,342.8" fill="#242e13"/><polygon points="344.7,350.0 344.7,342.8 339.1,346.4 339.0,352.5 339.7,353.2" fill="#536b2b"/><polygon points="338.0,351.4 339.0,352.5 339.1,346.4" fill="#77993d"/><polygon points="314.9,349.9 317.2,352.5 317.8,352.1 318.8,347.1 314.8,342.8" fill="#799d3f"/><polygon points="307.4,347.8 314.9,349.9 314.8,342.8 307.3,340.7" fill="#5a742e"/><polygon points="299.2,348.8 307.4,347.8 307.3,340.7 299.1,341.6" fill="#242e13"/><polygon points="299.2,348.8 299.1,341.6 293.4,345.2 293.5,351.5 294.0,352.1" fill="#536b2b"/><polygon points="292.3,350.2 293.5,351.5 293.4,345.2" fill="#77993d"/><polygon points="271.6,341.8 273.8,344.1 274.3,343.8 275.4,338.9 271.5,334.6" fill="#799d3f"/><polygon points="264.2,339.7 271.6,341.8 271.5,334.6 264.1,332.5" fill="#5a742e"/><polygon points="256.1,340.6 264.2,339.7 264.1,332.5 255.9,333.5" fill="#242e13"/><polygon points="256.1,340.6 255.9,333.5 250.2,337.1 250.3,343.5 250.7,344.0" fill="#536b2b"/><polygon points="248.9,342.0 250.3,343.5 250.2,337.1" fill="#77993d"/><polygon points="234.1,327.3 236.0,329.5 236.4,329.3 237.7,324.4 233.9,320.2" fill="#799d3f"/><polygon points="226.7,325.2 234.1,327.3 233.9,320.2 226.5,318.1" fill="#5a742e"/><polygon points="218.6,326.2 226.7,325.2 226.5,318.1 218.4,319.0" fill="#242e13"/><polygon points="218.6,326.2 218.4,319.0 212.6,322.6 212.8,329.1 213.2,329.5" fill="#536b2b"/><polygon points="211.3,327.4 212.8,329.1 212.6,322.6" fill="#77993d"/><polygon points="204.8,307.8 206.6,309.8 207.0,309.6 208.3,304.8 204.6,300.7" fill="#799d3f"/><polygon points="197.6,305.7 204.8,307.8 204.6,300.7 197.3,298.6" fill="#5a742e"/><polygon points="189.5,306.7 197.6,305.7 197.3,298.6 189.3,299.5" fill="#242e13"/><polygon points="189.5,306.7 189.3,299.5 183.5,303.0 183.7,309.6 184.0,310.0" fill="#536b2b"/><polygon points="182.1,307.8 183.7,309.6 183.5,303.0" fill="#77993d"/><polygon points="185.9,284.7 187.5,286.6 187.9,286.4 189.2,281.8 185.6,277.7" fill="#799d3f"/><polygon points="178.7,282.8 185.9,284.7 185.6,277.7 178.5,275.7" fill="#5a742e"/><polygon points="170.8,283.7 178.7,282.8 178.5,275.7 170.5,276.6" fill="#242e13"/><polygon points="170.8,283.7 170.5,276.6 164.7,280.0 165.0,286.5 165.3,286.9" fill="#536b2b"/><polygon points="163.3,284.7 165.0,286.5 164.7,280.0" fill="#77993d"/><polygon points="178.2,260.0 179.8,261.7 180.2,261.5 181.5,256.9 177.9,252.9" fill="#799d3f"/><polygon points="171.1,258.0 178.2,260.0 177.9,252.9 170.9,251.0" fill="#5a742e"/><polygon points="163.3,258.9 171.1,258.0 170.9,251.0 163.0,251.9" fill="#242e13"/><polygon points="163.3,258.9 163.0,251.9 157.3,255.2 157.5,261.6 157.9,262.0" fill="#536b2b"/><polygon points="155.9,259.8 157.5,261.6 157.3,255.2" fill="#77993d"/><polygon points="182.0,235.2 183.5,236.9 184.0,236.6 185.2,232.1 181.7,228.2" fill="#799d3f"/><polygon points="175.0,233.3 182.0,235.2 181.7,228.2 174.7,226.3" fill="#5a742e"/><polygon points="167.2,234.2 175.0,233.3 174.7,226.3 167.0,227.2" fill="#242e13"/><polygon points="167.2,234.2 167.0,227.2 161.3,230.5 161.6,236.7 162.0,237.2" fill="#536b2b"/><polygon points="160.0,234.9 161.6,236.7 161.3,230.5" fill="#77993d"/><polygon points="196.5,212.1 198.0,213.7 198.6,213.3 199.8,209.0 196.3,205.2" fill="#799d3f"/><polygon points="189.6,210.3 196.5,212.1 196.3,205.2 189.4,203.4" fill="#5a742e"/><polygon points="182.0,211.1 189.6,210.3 189.4,203.4 181.7,204.2" fill="#242e13"/><polygon points="182.0,211.1 181.7,204.2 176.2,207.4 176.4,213.4 177.0,214.0" fill="#536b2b"/><polygon points="174.9,211.7 176.4,213.4 176.2,207.4" fill="#77993d"/><polygon points="220.6,192.2 222.0,193.7 222.8,193.2 223.9,189.0 220.4,185.3" fill="#799d3f"/><polygon points="213.8,190.4 220.6,192.2 220.4,185.3 213.6,183.5" fill="#5a742e"/><polygon points="206.2,191.2 213.8,190.4 213.6,183.5 206.0,184.3" fill="#242e13"/><polygon points="206.2,191.2 206.0,184.3 200.5,187.4 200.7,193.2 201.4,193.9" fill="#536b2b"/><polygon points="199.3,191.6 200.7,193.2 200.5,187.4" fill="#77993d"/><polygon points="252.4,176.4 253.8,177.9 254.7,177.4 255.8,173.2 252.3,169.6" fill="#799d3f"/><polygon points="245.6,174.7 252.4,176.4 252.3,169.6 245.4,167.8" fill="#5a742e"/><polygon points="238.0,175.5 245.6,174.7 245.4,167.8 237.9,168.6" fill="#242e13"/><polygon points="238.0,175.5 237.9,168.6 232.5,171.7 232.7,177.2 233.5,178.1" fill="#536b2b"/><polygon points="231.4,175.8 232.7,177.2 232.5,171.7" fill="#77993d"/><polygon points="289.8,165.8 291.3,167.4 292.3,166.8 293.3,162.6 289.7,159.0" fill="#799d3f"/><polygon points="283.0,164.1 289.8,165.8 289.7,159.0 282.9,157.2" fill="#5a742e"/><polygon points="275.5,164.9 283.0,164.1 282.9,157.2 275.4,158.0" fill="#242e13"/><polygon points="275.5,164.9 275.4,158.0 270.1,161.1 270.2,166.4 271.2,167.4" fill="#536b2b"/><polygon points="269.1,165.2 270.2,166.4 270.1,161.1" fill="#77993d"/><polygon points="330.5,160.9 332.1,162.5 333.2,161.8 334.1,157.7 330.5,154.1" fill="#799d3f"/><polygon points="323.6,159.2 330.5,160.9 330.5,154.1 323.6,152.3" fill="#5a742e"/><polygon points="316.2,160.0 323.6,159.2 323.6,152.3 316.2,153.1" fill="#242e13"/><polygon points="316.2,160.0 316.2,153.1 311.0,156.1 311.0,161.3 312.1,162.4" fill="#536b2b"/><polygon points="310.0,160.2 311.0,161.3 311.0,156.1" fill="#77993d"/><polygon points="372.0,161.9 373.7,163.6 375.0,162.8 375.8,158.7 372.1,155.1" fill="#799d3f"/><polygon points="365.1,160.2 372.0,161.9 372.1,155.1 365.2,153.3" fill="#5a742e"/><polygon points="357.7,160.9 365.1,160.2 365.2,153.3 357.7,154.1" fill="#242e13"/><polygon points="357.7,160.9 357.7,154.1 352.6,157.1 352.6,162.1 353.8,163.3" fill="#536b2b"/><polygon points="351.7,161.2 352.6,162.1 352.6,157.1" fill="#77993d"/><polygon points="396.9,187.3 398.8,189.1 400.0,188.3 400.8,184.1 397.0,180.4" fill="#799d3f"/><polygon points="389.9,185.5 396.9,187.3 397.0,180.4 390.0,178.6" fill="#5a742e"/><polygon points="382.4,186.3 389.9,185.5 390.0,178.6 382.5,179.4" fill="#242e13"/><polygon points="382.4,186.3 382.5,179.4 377.3,182.5 377.3,187.5 378.4,188.7" fill="#536b2b"/><polygon points="376.5,186.7 377.3,187.5 377.3,182.5" fill="#77993d"/><polygon points="429.7,199.4 431.7,201.3 433.0,200.5 433.7,196.2 429.8,192.5" fill="#799d3f"/><polygon points="422.6,197.6 429.7,199.4 429.8,192.5 422.7,190.7" fill="#5a742e"/><polygon points="415.0,198.4 422.6,197.6 422.7,190.7 415.2,191.5" fill="#242e13"/><polygon points="415.0,198.4 415.2,191.5 410.0,194.6 409.9,199.6 411.2,200.8" fill="#536b2b"/><polygon points="409.2,198.9 409.9,199.6 410.0,194.6" fill="#77993d"/><polygon points="454.7,216.7 456.9,218.8 458.2,217.9 458.9,213.6 454.9,209.7" fill="#799d3f"/><polygon points="447.6,214.9 454.7,216.7 454.9,209.7 447.7,207.9" fill="#5a742e"/><polygon points="440.0,215.7 447.6,214.9 447.7,207.9 440.1,208.7" fill="#242e13"/><polygon points="440.0,215.7 440.1,208.7 435.0,211.9 434.9,216.9 436.1,218.1" fill="#536b2b"/><polygon points="434.3,216.3 434.9,216.9 435.0,211.9" fill="#77993d"/><polygon points="469.6,237.7 471.9,240.0 473.2,239.1 473.9,234.7 469.8,230.7" fill="#799d3f"/><polygon points="462.3,235.9 469.6,237.7 469.8,230.7 462.5,228.9" fill="#5a742e"/><polygon points="454.7,236.7 462.3,235.9 462.5,228.9 454.9,229.7" fill="#242e13"/><polygon points="454.7,236.7 454.9,229.7 449.7,233.0 449.5,238.0 450.8,239.2" fill="#536b2b"/><polygon points="449.0,237.4 449.5,238.0 449.7,233.0" fill="#77993d"/><polygon points="472.5,260.6 474.9,262.9 476.2,262.1 476.8,257.6 472.7,253.6" fill="#799d3f"/><polygon points="465.2,258.7 472.5,260.6 472.7,253.6 465.4,251.6" fill="#5a742e"/><polygon points="457.4,259.5 465.2,258.7 465.4,251.6 457.6,252.5" fill="#242e13"/><polygon points="457.4,259.5 457.6,252.5 452.4,255.8 452.2,261.0 453.4,262.1" fill="#536b2b"/><polygon points="451.6,260.4 452.2,261.0 452.4,255.8" fill="#77993d"/><polygon points="462.8,283.1 465.2,285.5 466.4,284.7 467.1,280.1 463.0,276.0" fill="#799d3f"/><polygon points="455.4,281.1 462.8,283.1 463.0,276.0 455.6,274.0" fill="#5a742e"/><polygon points="447.5,282.0 455.4,281.1 455.6,274.0 447.7,274.9" fill="#242e13"/><polygon points="447.5,282.0 447.7,274.9 442.4,278.3 442.3,283.6 443.3,284.7" fill="#536b2b"/><polygon points="441.6,283.0 442.3,283.6 442.4,278.3" fill="#77993d"/><polygon points="441.0,302.9 443.5,305.4 444.6,304.7 445.3,299.9 441.2,295.8" fill="#799d3f"/><polygon points="433.5,300.8 441.0,302.9 441.2,295.8 433.7,293.7" fill="#5a742e"/><polygon points="425.6,301.8 433.5,300.8 433.7,293.7 425.8,294.6" fill="#242e13"/><polygon points="425.6,301.8 425.8,294.6 420.4,298.1 420.3,303.6 421.2,304.6" fill="#536b2b"/><polygon points="419.6,302.9 420.3,303.6 420.4,298.1" fill="#77993d"/><polygon points="409.1,317.8 411.6,320.3 412.6,319.7 413.4,314.9 409.3,310.7" fill="#799d3f"/><polygon points="401.7,315.8 409.1,317.8 409.3,310.7 401.8,308.6" fill="#5a742e"/><polygon points="393.7,316.7 401.7,315.8 401.8,308.6 393.8,309.5" fill="#242e13"/><polygon points="393.7,316.7 393.8,309.5 388.3,313.1 388.2,318.7 389.1,319.6" fill="#536b2b"/><polygon points="387.4,317.9 388.2,318.7 388.3,313.1" fill="#77993d"/><polygon points="370.4,326.2 372.8,328.7 373.6,328.1 374.5,323.3 370.4,319.0" fill="#799d3f"/><polygon points="362.9,324.1 370.4,326.2 370.4,319.0 363.0,317.0" fill="#5a742e"/><polygon points="354.9,325.1 362.9,324.1 363.0,317.0 354.9,317.9" fill="#242e13"/><polygon points="354.9,325.1 354.9,317.9 349.3,321.5 349.3,327.3 350.1,328.1" fill="#536b2b"/><polygon points="348.4,326.3 349.3,327.3 349.3,321.5" fill="#77993d"/><polygon points="328.9,327.0 331.1,329.5 331.8,329.0 332.8,324.2 328.9,319.9" fill="#799d3f"/><polygon points="321.4,325.0 328.9,327.0 328.9,319.9 321.4,317.8" fill="#5a742e"/><polygon points="313.4,325.9 321.4,325.0 321.4,317.8 313.3,318.8" fill="#242e13"/><polygon points="313.4,325.9 313.3,318.8 307.7,322.3 307.7,328.4 308.4,329.1" fill="#536b2b"/><polygon points="306.6,327.2 307.7,328.4 307.7,322.3" fill="#77993d"/><polygon points="289.1,320.3 291.2,322.6 291.8,322.2 292.9,317.4 289.0,313.1" fill="#799d3f"/><polygon points="281.7,318.2 289.1,320.3 289.0,313.1 281.6,311.1" fill="#5a742e"/><polygon points="273.7,319.1 281.7,318.2 281.6,311.1 273.6,312.0" fill="#242e13"/><polygon points="273.7,319.1 273.6,312.0 267.9,315.5 268.0,321.8 268.5,322.4" fill="#536b2b"/><polygon points="266.7,320.4 268.0,321.8 267.9,315.5" fill="#77993d"/><polygon points="255.3,306.7 257.2,308.8 257.7,308.5 258.9,303.7 255.1,299.6" fill="#799d3f"/><polygon points="248.0,304.6 255.3,306.7 255.1,299.6 247.8,297.5" fill="#5a742e"/><polygon points="240.0,305.6 248.0,304.6 247.8,297.5 239.8,298.4" fill="#242e13"/><polygon points="240.0,305.6 239.8,298.4 234.1,301.9 234.2,308.2 234.7,308.8" fill="#536b2b"/><polygon points="232.9,306.7 234.2,308.2 234.1,301.9" fill="#77993d"/><polygon points="230.9,287.8 232.7,289.8 233.2,289.5 234.4,284.8 230.7,280.7" fill="#799d3f"/><polygon points="223.7,285.8 230.9,287.8 230.7,280.7 223.5,278.7" fill="#5a742e"/><polygon points="215.7,286.7 223.7,285.8 223.5,278.7 215.5,279.6" fill="#242e13"/><polygon points="215.7,286.7 215.5,279.6 209.8,283.0 210.0,289.4 210.5,289.9" fill="#536b2b"/><polygon points="208.5,287.7 210.0,289.4 209.8,283.0" fill="#77993d"/><polygon points="218.2,265.7 219.9,267.6 220.4,267.3 221.6,262.7 218.0,258.7" fill="#799d3f"/><polygon points="211.1,263.8 218.2,265.7 218.0,258.7 210.9,256.7" fill="#5a742e"/><polygon points="203.2,264.6 211.1,263.8 210.9,256.7 203.0,257.6" fill="#242e13"/><polygon points="203.2,264.6 203.0,257.6 197.3,261.0 197.5,267.2 198.0,267.7" fill="#536b2b"/><polygon points="196.0,265.5 197.5,267.2 197.3,261.0" fill="#77993d"/><polygon points="218.1,242.7 219.7,244.5 220.3,244.1 221.5,239.7 217.9,235.7" fill="#799d3f"/><polygon points="211.1,240.8 218.1,242.7 217.9,235.7 210.9,233.8" fill="#5a742e"/><polygon points="203.3,241.7 211.1,240.8 210.9,233.8 203.1,234.7" fill="#242e13"/><polygon points="203.3,241.7 203.1,234.7 197.5,238.0 197.7,244.1 198.2,244.7" fill="#536b2b"/><polygon points="196.2,242.4 197.7,244.1 197.5,238.0" fill="#77993d"/><polygon points="230.2,221.1 231.8,222.8 232.5,222.4 233.7,218.0 230.1,214.2" fill="#799d3f"/><polygon points="223.3,219.3 230.2,221.1 230.1,214.2 223.1,212.3" fill="#5a742e"/><polygon points="215.6,220.1 223.3,219.3 223.1,212.3 215.4,213.1" fill="#242e13"/><polygon points="215.6,220.1 215.4,213.1 209.8,216.3 210.0,222.2 210.7,223.0" fill="#536b2b"/><polygon points="208.6,220.7 210.0,222.2 209.8,216.3" fill="#77993d"/><polygon points="253.1,202.8 254.6,204.5 255.4,204.0 256.5,199.7 252.9,195.9" fill="#799d3f"/><polygon points="246.1,201.0 253.1,202.8 252.9,195.9 246.0,194.1" fill="#5a742e"/><polygon points="238.5,201.8 246.1,201.0 246.0,194.1 238.4,194.9" fill="#242e13"/><polygon points="238.5,201.8 238.4,194.9 232.9,198.1 233.1,203.7 233.8,204.6" fill="#536b2b"/><polygon points="231.8,202.4 233.1,203.7 232.9,198.1" fill="#77993d"/><polygon points="284.2,189.5 285.8,191.1 286.8,190.5 287.8,186.3 284.2,182.6" fill="#799d3f"/><polygon points="277.3,187.7 284.2,189.5 284.2,182.6 277.2,180.8" fill="#5a742e"/><polygon points="269.8,188.5 277.3,187.7 277.2,180.8 269.7,181.6" fill="#242e13"/><polygon points="269.8,188.5 269.7,181.6 264.3,184.7 264.4,190.2 265.3,191.1" fill="#536b2b"/><polygon points="263.2,188.9 264.4,190.2 264.3,184.7" fill="#77993d"/><polygon points="320.8,182.1 322.5,183.8 323.5,183.1 324.5,178.9 320.8,175.2" fill="#799d3f"/><polygon points="313.9,180.3 320.8,182.1 320.8,175.2 313.9,173.5" fill="#5a742e"/><polygon points="306.4,181.1 313.9,180.3 313.9,173.5 306.4,174.3" fill="#242e13"/><polygon points="306.4,181.1 306.4,174.3 301.1,177.3 301.1,182.6 302.1,183.7" fill="#536b2b"/><polygon points="300.1,181.6 301.1,182.6 301.1,177.3" fill="#77993d"/><polygon points="359.5,181.4 361.3,183.1 362.4,182.4 363.3,178.2 359.6,174.5" fill="#799d3f"/><polygon points="352.6,179.6 359.5,181.4 359.6,174.5 352.6,172.7" fill="#5a742e"/><polygon points="345.1,180.4 352.6,179.6 352.6,172.7 345.1,173.5" fill="#242e13"/><polygon points="345.1,180.4 345.1,173.5 339.9,176.6 339.9,181.7 341.0,182.8" fill="#536b2b"/><polygon points="338.9,180.8 339.9,181.7 339.9,176.6" fill="#77993d"/><polygon points="383.3,204.0 385.2,205.9 386.4,205.2 387.2,200.9 383.4,197.1" fill="#799d3f"/><polygon points="376.3,202.2 383.3,204.0 383.4,197.1 376.3,195.3" fill="#5a742e"/><polygon points="368.7,203.0 376.3,202.2 376.3,195.3 368.8,196.1" fill="#242e13"/><polygon points="368.7,203.0 368.8,196.1 363.5,199.3 363.5,204.4 364.6,205.5" fill="#536b2b"/><polygon points="362.6,203.6 363.5,204.4 363.5,199.3" fill="#77993d"/><polygon points="409.8,214.3 411.8,216.3 413.1,215.5 413.8,211.2 409.9,207.4" fill="#799d3f"/><polygon points="402.7,212.5 409.8,214.3 409.9,207.4 402.8,205.5" fill="#5a742e"/><polygon points="395.1,213.3 402.7,212.5 402.8,205.5 395.2,206.4" fill="#242e13"/><polygon points="395.1,213.3 395.2,206.4 390.0,209.5 389.9,214.7 391.0,215.8" fill="#536b2b"/><polygon points="389.1,213.9 389.9,214.7 390.0,209.5" fill="#77993d"/><polygon points="428.8,229.2 431.0,231.3 432.2,230.5 433.0,226.1 429.0,222.2" fill="#799d3f"/><polygon points="421.7,227.3 428.8,229.2 429.0,222.2 421.8,220.3" fill="#5a742e"/><polygon points="414.0,228.1 421.7,227.3 421.8,220.3 414.2,221.2" fill="#242e13"/><polygon points="414.0,228.1 414.2,221.2 408.9,224.4 408.8,229.5 410.0,230.6" fill="#536b2b"/><polygon points="408.1,228.8 408.8,229.5 408.9,224.4" fill="#77993d"/><polygon points="438.1,247.0 440.3,249.2 441.6,248.4 442.3,243.9 438.3,239.9" fill="#799d3f"/><polygon points="430.8,245.0 438.1,247.0 438.3,239.9 431.0,238.0" fill="#5a742e"/><polygon points="423.1,245.9 430.8,245.0 431.0,238.0 423.3,238.9" fill="#242e13"/><polygon points="423.1,245.9 423.3,238.9 418.0,242.2 417.9,247.4 419.0,248.5" fill="#536b2b"/><polygon points="417.2,246.7 417.9,247.4 418.0,242.2" fill="#77993d"/><polygon points="436.2,265.6 438.5,267.9 439.7,267.2 440.4,262.6 436.3,258.6" fill="#799d3f"/><polygon points="428.8,263.7 436.2,265.6 436.3,258.6 429.0,256.7" fill="#5a742e"/><polygon points="421.1,264.6 428.8,263.7 429.0,256.7 421.2,257.5" fill="#242e13"/><polygon points="421.1,264.6 421.2,257.5 415.9,260.9 415.8,266.1 416.9,267.2" fill="#536b2b"/><polygon points="415.1,265.5 415.8,266.1 415.9,260.9" fill="#77993d"/><polygon points="423.0,282.9 425.4,285.3 426.4,284.6 427.2,279.9 423.1,275.9" fill="#799d3f"/><polygon points="415.6,281.0 423.0,282.9 423.1,275.9 415.8,273.9" fill="#5a742e"/><polygon points="407.8,281.8 415.6,281.0 415.8,273.9 407.9,274.8" fill="#242e13"/><polygon points="407.8,281.8 407.9,274.8 402.5,278.2 402.4,283.6 403.4,284.6" fill="#536b2b"/><polygon points="401.7,282.8 402.4,283.6 402.5,278.2" fill="#77993d"/><polygon points="400.0,296.6 402.3,299.0 403.3,298.4 404.2,293.7 400.1,289.5" fill="#799d3f"/><polygon points="392.6,294.6 400.0,296.6 400.1,289.5 392.7,287.5" fill="#5a742e"/><polygon points="384.7,295.5 392.6,294.6 392.7,287.5 384.8,288.4" fill="#242e13"/><polygon points="384.7,295.5 384.8,288.4 379.3,291.9 379.3,297.5 380.2,298.4" fill="#536b2b"/><polygon points="378.4,296.6 379.3,297.5 379.3,291.9" fill="#77993d"/><polygon points="369.9,304.9 372.2,307.3 373.1,306.7 374.0,301.9 370.0,297.8" fill="#799d3f"/><polygon points="362.5,302.9 369.9,304.9 370.0,297.8 362.6,295.8" fill="#5a742e"/><polygon points="354.6,303.8 362.5,302.9 362.6,295.8 354.6,296.7" fill="#242e13"/><polygon points="354.6,303.8 354.6,296.7 349.1,300.2 349.1,305.9 349.9,306.8" fill="#536b2b"/><polygon points="348.1,304.9 349.1,305.9 349.1,300.2" fill="#77993d"/><polygon points="336.6,306.6 338.8,308.9 339.5,308.4 340.5,303.7 336.6,299.5" fill="#799d3f"/><polygon points="329.2,304.6 336.6,306.6 336.6,299.5 329.2,297.5" fill="#5a742e"/><polygon points="321.2,305.5 329.2,304.6 329.2,297.5 321.2,298.4" fill="#242e13"/><polygon points="321.2,305.5 321.2,298.4 315.6,301.9 315.6,307.8 316.4,308.5" fill="#536b2b"/><polygon points="314.6,306.6 315.6,307.8 315.6,301.9" fill="#77993d"/><polygon points="304.3,301.5 306.4,303.7 307.1,303.3 308.1,298.6 304.2,294.4" fill="#799d3f"/><polygon points="297.0,299.5 304.3,301.5 304.2,294.4 296.9,292.4" fill="#5a742e"/><polygon points="289.0,300.4 297.0,299.5 296.9,292.4 288.9,293.3" fill="#242e13"/><polygon points="289.0,300.4 288.9,293.3 283.3,296.8 283.4,302.8 284.0,303.5" fill="#536b2b"/><polygon points="282.2,301.5 283.4,302.8 283.3,296.8" fill="#77993d"/><polygon points="277.2,290.3 279.2,292.5 279.8,292.1 280.9,287.4 277.1,283.3" fill="#799d3f"/><polygon points="270.0,288.4 277.2,290.3 277.1,283.3 269.9,281.3" fill="#5a742e"/><polygon points="262.0,289.3 270.0,288.4 269.9,281.3 261.9,282.2" fill="#242e13"/><polygon points="262.0,289.3 261.9,282.2 256.3,285.6 256.4,291.7 257.0,292.3" fill="#536b2b"/><polygon points="255.1,290.3 256.4,291.7 256.3,285.6" fill="#77993d"/><polygon points="258.7,274.6 260.6,276.6 261.2,276.2 262.4,271.6 258.6,267.5" fill="#799d3f"/><polygon points="251.6,272.6 258.7,274.6 258.6,267.5 251.4,265.6" fill="#5a742e"/><polygon points="243.7,273.5 251.6,272.6 251.4,265.6 243.5,266.5" fill="#242e13"/><polygon points="243.7,273.5 243.5,266.5 237.9,269.8 238.0,275.9 238.6,276.6" fill="#536b2b"/><polygon points="236.7,274.5 238.0,275.9 237.9,269.8" fill="#77993d"/><polygon points="251.0,256.3 252.7,258.2 253.4,257.8 254.5,253.3 250.8,249.3" fill="#799d3f"/><polygon points="243.9,254.4 251.0,256.3 250.8,249.3 243.7,247.4" fill="#5a742e"/><polygon points="236.0,255.3 243.9,254.4 243.7,247.4 235.9,248.2" fill="#242e13"/><polygon points="236.0,255.3 235.9,248.2 230.3,251.6 230.4,257.6 231.0,258.2" fill="#536b2b"/><polygon points="229.1,256.1 230.4,257.6 230.3,251.6" fill="#77993d"/><polygon points="254.5,237.8 256.2,239.6 256.9,239.2 258.1,234.7 254.4,230.8" fill="#799d3f"/><polygon points="247.5,235.9 254.5,237.8 254.4,230.8 247.4,228.9" fill="#5a742e"/><polygon points="239.8,236.8 247.5,235.9 247.4,228.9 239.6,229.8" fill="#242e13"/><polygon points="239.8,236.8 239.6,229.8 234.1,233.0 234.2,238.9 234.9,239.7" fill="#536b2b"/><polygon points="232.9,237.5 234.2,238.9 234.1,233.0" fill="#77993d"/><polygon points="268.8,221.3 270.5,223.0 271.3,222.5 272.4,218.1 268.7,214.3" fill="#799d3f"/><polygon points="261.8,219.4 268.8,221.3 268.7,214.3 261.7,212.4" fill="#5a742e"/><polygon points="254.1,220.2 261.8,219.4 261.7,212.4 254.0,213.3" fill="#242e13"/><polygon points="254.1,220.2 254.0,213.3 248.5,216.5 248.6,222.2 249.4,223.0" fill="#536b2b"/><polygon points="247.4,220.9 248.6,222.2 248.5,216.5" fill="#77993d"/><polygon points="291.8,208.5 293.5,210.3 294.4,209.7 295.4,205.4 291.7,201.6" fill="#799d3f"/><polygon points="284.8,206.7 291.8,208.5 291.7,201.6 284.7,199.8" fill="#5a742e"/><polygon points="277.2,207.5 284.8,206.7 284.7,199.8 277.1,200.6" fill="#242e13"/><polygon points="277.2,207.5 277.1,200.6 271.7,203.8 271.8,209.3 272.7,210.2" fill="#536b2b"/><polygon points="270.6,208.1 271.8,209.3 271.7,203.8" fill="#77993d"/><polygon points="320.8,201.0 322.5,202.7 323.5,202.1 324.5,197.8 320.8,194.1" fill="#799d3f"/><polygon points="313.8,199.2 320.8,201.0 320.8,194.1 313.8,192.3" fill="#5a742e"/><polygon points="306.2,200.0 313.8,199.2 313.8,192.3 306.2,193.1" fill="#242e13"/><polygon points="306.2,200.0 306.2,193.1 300.9,196.2 300.9,201.6 301.9,202.6" fill="#536b2b"/><polygon points="299.8,200.5 300.9,201.6 300.9,196.2" fill="#77993d"/><polygon points="352.5,199.5 354.3,201.2 355.4,200.6 356.3,196.3 352.5,192.5" fill="#799d3f"/><polygon points="345.5,197.6 352.5,199.5 352.5,192.5 345.5,190.7" fill="#5a742e"/><polygon points="337.9,198.5 345.5,197.6 345.5,190.7 337.9,191.5" fill="#242e13"/><polygon points="337.9,198.5 337.9,191.5 332.7,194.7 332.7,199.9 333.7,201.0" fill="#536b2b"/><polygon points="331.7,199.0 332.7,199.9 332.7,194.7" fill="#77993d"/><polygon points="367.8,223.2 369.7,225.2 370.8,224.5 371.7,220.1 367.8,216.3" fill="#799d3f"/><polygon points="360.7,221.4 367.8,223.2 367.8,216.3 360.7,214.4" fill="#5a742e"/><polygon points="353.0,222.2 360.7,221.4 360.7,214.4 353.0,215.3" fill="#242e13"/><polygon points="353.0,222.2 353.0,215.3 347.7,218.5 347.7,223.8 348.7,224.8" fill="#536b2b"/><polygon points="346.8,222.9 347.7,223.8 347.7,218.5" fill="#77993d"/><polygon points="392.9,236.3 394.9,238.4 396.1,237.7 396.9,233.3 393.0,229.4" fill="#799d3f"/><polygon points="385.7,234.5 392.9,236.3 393.0,229.4 385.8,227.5" fill="#5a742e"/><polygon points="378.0,235.3 385.7,234.5 385.8,227.5 378.1,228.3" fill="#242e13"/><polygon points="378.0,235.3 378.1,228.3 372.8,231.6 372.7,236.9 373.8,237.9" fill="#536b2b"/><polygon points="371.9,236.0 372.7,236.9 372.8,231.6" fill="#77993d"/><polygon points="400.0,255.5 402.1,257.7 403.2,257.0 404.0,252.5 400.1,248.5" fill="#799d3f"/><polygon points="392.7,253.6 400.0,255.5 400.1,248.5 392.8,246.6" fill="#5a742e"/><polygon points="385.0,254.5 392.7,253.6 392.8,246.6 385.0,247.4" fill="#242e13"/><polygon points="385.0,254.5 385.0,247.4 379.7,250.8 379.6,256.1 380.7,257.1" fill="#536b2b"/><polygon points="378.8,255.3 379.6,256.1 379.7,250.8" fill="#77993d"/><polygon points="385.9,273.5 388.1,275.8 389.1,275.1 389.9,270.5 385.9,266.5" fill="#799d3f"/><polygon points="378.6,271.6 385.9,273.5 385.9,266.5 378.6,264.5" fill="#5a742e"/><polygon points="370.7,272.4 378.6,271.6 378.6,264.5 370.8,265.4" fill="#242e13"/><polygon points="370.7,272.4 370.8,265.4 365.4,268.8 365.3,274.3 366.3,275.2" fill="#536b2b"/><polygon points="364.5,273.4 365.3,274.3 365.4,268.8" fill="#77993d"/><polygon points="355.6,283.3 357.8,285.5 358.7,285.0 359.6,280.3 355.7,276.2" fill="#799d3f"/><polygon points="348.3,281.3 355.6,283.3 355.7,276.2 348.3,274.2" fill="#5a742e"/><polygon points="340.4,282.2 348.3,281.3 348.3,274.2 340.5,275.1" fill="#242e13"/><polygon points="340.4,282.2 340.5,275.1 335.0,278.5 335.0,284.2 335.8,285.1" fill="#536b2b"/><polygon points="334.0,283.2 335.0,284.2 335.0,278.5" fill="#77993d"/><polygon points="321.1,280.8 323.1,283.0 323.9,282.5 324.9,277.8 321.0,273.8" fill="#799d3f"/><polygon points="313.8,278.8 321.1,280.8 321.0,273.8 313.8,271.8" fill="#5a742e"/><polygon points="305.9,279.7 313.8,278.8 313.8,271.8 305.9,272.7" fill="#242e13"/><polygon points="305.9,279.7 305.9,272.7 300.3,276.1 300.4,281.9 301.1,282.7" fill="#536b2b"/><polygon points="299.3,280.7 300.4,281.9 300.3,276.1" fill="#77993d"/><polygon points="295.9,267.1 297.8,269.2 298.6,268.7 299.6,264.1 295.8,260.1" fill="#799d3f"/><polygon points="288.7,265.2 295.9,267.1 295.8,260.1 288.6,258.2" fill="#5a742e"/><polygon points="280.9,266.1 288.7,265.2 288.6,258.2 280.8,259.0" fill="#242e13"/><polygon points="280.9,266.1 280.8,259.0 275.2,262.4 275.3,268.3 276.0,269.0" fill="#536b2b"/><polygon points="274.1,267.0 275.3,268.3 275.2,262.4" fill="#77993d"/><polygon points="289.7,247.8 291.5,249.7 292.3,249.2 293.4,244.7 289.6,240.8" fill="#799d3f"/><polygon points="282.6,245.9 289.7,247.8 289.6,240.8 282.5,238.9" fill="#5a742e"/><polygon points="274.8,246.7 282.6,245.9 282.5,238.9 274.7,239.7" fill="#242e13"/><polygon points="274.8,246.7 274.7,239.7 269.2,243.0 269.3,248.8 270.1,249.6" fill="#536b2b"/><polygon points="268.1,247.5 269.3,248.8 269.2,243.0" fill="#77993d"/><polygon points="304.5,230.2 306.3,232.1 307.1,231.5 308.2,227.1 304.4,223.2" fill="#799d3f"/><polygon points="297.4,228.3 304.5,230.2 304.4,223.2 297.3,221.3" fill="#5a742e"/><polygon points="289.7,229.2 297.4,228.3 297.3,221.3 289.6,222.2" fill="#242e13"/><polygon points="289.7,229.2 289.6,222.2 284.2,225.4 284.3,231.0 285.1,231.9" fill="#536b2b"/><polygon points="283.1,229.8 284.3,231.0 284.2,225.4" fill="#77993d"/><polygon points="334.2,220.9 336.0,222.8 337.0,222.2 338.0,217.8 334.2,214.0" fill="#799d3f"/><polygon points="327.1,219.1 334.2,220.9 334.2,214.0 327.1,212.1" fill="#5a742e"/><polygon points="319.5,219.9 327.1,219.1 327.1,212.1 319.4,212.9" fill="#242e13"/><polygon points="319.5,219.9 319.4,212.9 314.1,216.2 314.1,221.6 315.0,222.6" fill="#536b2b"/><polygon points="313.1,220.5 314.1,221.6 314.1,216.2" fill="#77993d"/><polygon points="361.0,252.8 361.6,251.5 361.0,246.7" fill="#7b9f40"/><polygon points="357.7,249.3 360.7,253.4 361.0,252.8 361.0,246.7 357.8,242.2" fill="#7ca040"/><polygon points="352.1,245.6 357.7,249.3 357.8,242.2 352.2,238.6" fill="#72943b"/><polygon points="344.8,243.3 352.1,245.6 352.2,238.6 344.9,236.3" fill="#607c31"/><polygon points="336.6,242.4 344.8,243.3 344.9,236.3 336.6,235.4" fill="#465b24"/><polygon points="328.3,243.1 336.6,242.4 336.6,235.4 328.3,236.1" fill="#293415"/><polygon points="320.8,245.2 328.3,243.1 328.3,236.1 320.8,238.2" fill="#35441b"/><polygon points="314.9,248.7 320.8,245.2 320.8,238.2 314.9,241.7" fill="#51692a"/><polygon points="311.3,253.1 314.9,248.7 314.9,241.7 311.3,246.0" fill="#688736"/><polygon points="311.3,253.1 311.3,246.0 310.3,250.9 311.3,253.3" fill="#779a3d"/><polygon points="621.7,333.4 624.7,328.6 627.7,285.4 624.7,290.1" fill="#a6901d"/><polygon points="624.7,328.6 627.4,323.8 630.5,280.6 627.7,285.4" fill="#a9921e"/><polygon points="627.4,323.8 629.9,319.0 633.0,275.8 630.5,280.6" fill="#ab941e"/><polygon points="629.9,319.0 632.1,314.1 635.2,271.0 633.0,275.8" fill="#ae961f"/><polygon points="632.1,314.1 634.1,309.2 637.2,266.1 635.2,271.0" fill="#b0981f"/><polygon points="634.1,309.2 635.8,304.2 639.0,261.2 637.2,266.1" fill="#b29a1f"/><polygon points="635.8,304.2 637.3,299.3 640.4,256.3 639.0,261.2" fill="#b49b20"/><polygon points="637.3,299.3 638.6,294.3 641.7,251.4 640.4,256.3" fill="#b69d20"/><polygon points="638.6,294.3 639.6,289.4 642.7,246.5 641.7,251.4" fill="#b89f20"/><polygon points="639.6,289.4 640.3,284.4 643.4,241.6 642.7,246.5" fill="#baa021"/><polygon points="640.3,284.4 640.8,279.5 643.9,236.7 643.4,241.6" fill="#bba221"/><polygon points="31.2,278.9 31.6,283.9 28.5,241.1 28.1,236.2" fill="#c5aa23"/><polygon points="31.6,283.9 32.4,288.8 29.2,246.0 28.5,241.1" fill="#c5aa23"/><polygon points="32.4,288.8 33.3,293.8 30.2,250.9 29.2,246.0" fill="#c6ab23"/><polygon points="33.3,293.8 34.5,298.7 31.4,255.8 30.2,250.9" fill="#c6ab23"/><polygon points="34.5,298.7 36.0,303.7 32.9,260.7 31.4,255.8" fill="#c6ab23"/><polygon points="36.0,303.7 37.7,308.6 34.6,265.6 32.9,260.7" fill="#c6ab23"/><polygon points="37.7,308.6 39.6,313.5 36.5,270.4 34.6,265.6" fill="#c6ab23"/><polygon points="39.6,313.5 41.8,318.4 38.8,275.3 36.5,270.4" fill="#c5aa23"/><polygon points="41.8,318.4 44.3,323.3 41.2,280.1 38.8,275.3" fill="#c5aa23"/><polygon points="44.3,323.3 47.0,328.1 43.9,284.8 41.2,280.1" fill="#c4a923"/><polygon points="47.0,328.1 49.9,332.9 46.9,289.6 43.9,284.8" fill="#c3a923"/><polygon points="49.9,332.9 53.1,337.6 50.1,294.3 46.9,289.6" fill="#c3a822"/><polygon points="53.1,337.6 56.6,342.3 53.6,299.0 50.1,294.3" fill="#c2a722"/><polygon points="56.6,342.3 60.2,347.0 57.3,303.6 53.6,299.0" fill="#c1a622"/><polygon points="60.2,347.0 64.2,351.6 61.3,308.1 57.3,303.6" fill="#c0a522"/><polygon points="64.2,351.6 68.3,356.2 65.5,312.6 61.3,308.1" fill="#bea422"/><polygon points="68.3,356.2 72.8,360.6 69.9,317.1 65.5,312.6" fill="#bda321"/><polygon points="72.8,360.6 77.4,365.1 74.6,321.4 69.9,317.1" fill="#bca221"/><polygon points="77.4,365.1 82.3,369.4 79.6,325.7 74.6,321.4" fill="#baa121"/><polygon points="82.3,369.4 87.4,373.7 84.7,330.0 79.6,325.7" fill="#b89f21"/><polygon points="87.4,373.7 92.7,377.8 90.1,334.1 84.7,330.0" fill="#b79e20"/><polygon points="92.7,377.8 98.3,381.9 95.7,338.2 90.1,334.1" fill="#b59c20"/><polygon points="98.3,381.9 104.0,386.0 101.5,342.1 95.7,338.2" fill="#b39a20"/><polygon points="104.0,386.0 110.0,389.9 107.6,346.0 101.5,342.1" fill="#b1981f"/><polygon points="110.0,389.9 116.2,393.7 113.9,349.8 107.6,346.0" fill="#ae971f"/><polygon points="116.2,393.7 122.7,397.4 120.3,353.5 113.9,349.8" fill="#ac951e"/><polygon points="122.7,397.4 129.3,401.0 127.0,357.1 120.3,353.5" fill="#aa921e"/><polygon points="129.3,401.0 136.1,404.5 133.9,360.5 127.0,357.1" fill="#a7901e"/><polygon points="136.1,404.5 143.1,407.9 141.0,363.9 133.9,360.5" fill="#a58e1d"/><polygon points="143.1,407.9 150.2,411.2 148.2,367.1 141.0,363.9" fill="#a28c1d"/><polygon points="150.2,411.2 157.6,414.3 155.7,370.3 148.2,367.1" fill="#9f891c"/><polygon points="157.6,414.3 165.1,417.4 163.3,373.3 155.7,370.3" fill="#9c871c"/><polygon points="165.1,417.4 172.8,420.3 171.0,376.1 163.3,373.3" fill="#99841b"/><polygon points="172.8,420.3 180.7,423.0 179.0,378.9 171.0,376.1" fill="#96821b"/><polygon points="180.7,423.0 188.7,425.7 187.1,381.5 179.0,378.9" fill="#937f1a"/><polygon points="188.7,425.7 196.8,428.2 195.3,384.0 187.1,381.5" fill="#907c19"/><polygon points="196.8,428.2 205.1,430.5 203.7,386.3 195.3,384.0" fill="#8d7a19"/><polygon points="205.1,430.5 213.5,432.7 212.2,388.5 203.7,386.3" fill="#8a7718"/><polygon points="213.5,432.7 222.1,434.8 220.8,390.5 212.2,388.5" fill="#867418"/><polygon points="222.1,434.8 230.7,436.7 229.6,392.4 220.8,390.5" fill="#837117"/><polygon points="230.7,436.7 239.5,438.5 238.4,394.2 229.6,392.4" fill="#7f6e16"/><polygon points="239.5,438.5 248.3,440.1 247.4,395.8 238.4,394.2" fill="#7c6b16"/><polygon points="248.3,440.1 257.3,441.6 256.4,397.2 247.4,395.8" fill="#786815"/><polygon points="257.3,441.6 266.3,442.9 265.5,398.5 256.4,397.2" fill="#746515"/><polygon points="266.3,442.9 275.4,444.0 274.7,399.7 265.5,398.5" fill="#716114"/><polygon points="275.4,444.0 284.5,445.0 283.9,400.6 274.7,399.7" fill="#6d5e13"/><polygon points="284.5,445.0 293.7,445.8 293.2,401.4 283.9,400.6" fill="#695b13"/><polygon points="293.7,445.8 302.9,446.5 302.6,402.1 293.2,401.4" fill="#655712"/><polygon points="302.9,446.5 312.2,447.0 312.0,402.6 302.6,402.1" fill="#615411"/><polygon points="312.2,447.0 321.5,447.3 321.4,402.9 312.0,402.6" fill="#5d5110"/><polygon points="321.5,447.3 330.8,447.5 330.8,403.1 321.4,402.9" fill="#594d10"/><polygon points="330.8,447.5 340.1,447.5 340.2,403.1 330.8,403.1" fill="#554a0f"/><polygon points="340.1,447.5 349.5,447.3 349.6,403.0 340.2,403.1" fill="#51460e"/><polygon points="349.5,447.3 358.8,447.0 359.0,402.6 349.6,403.0" fill="#4d430e"/><polygon points="358.8,447.0 368.0,446.5 368.4,402.2 359.0,402.6" fill="#493f0d"/><polygon points="368.0,446.5 377.3,445.9 377.7,401.5 368.4,402.2" fill="#453c0c"/><polygon points="377.3,445.9 386.5,445.1 387.0,400.7 377.7,401.5" fill="#41380b"/><polygon points="386.5,445.1 395.6,444.1 396.3,399.8 387.0,400.7" fill="#3d340b"/><polygon points="395.6,444.1 404.7,443.0 405.5,398.7 396.3,399.8" fill="#39310a"/><polygon points="404.7,443.0 413.7,441.7 414.6,397.4 405.5,398.7" fill="#342d09"/><polygon points="413.7,441.7 422.7,440.3 423.6,395.9 414.6,397.4" fill="#332c09"/><polygon points="422.7,440.3 431.5,438.7 432.6,394.4 423.6,395.9" fill="#37300a"/><polygon points="431.5,438.7 440.3,436.9 441.5,392.6 432.6,394.4" fill="#3c330b"/><polygon points="440.3,436.9 449.0,435.0 450.2,390.8 441.5,392.6" fill="#40370b"/><polygon points="449.0,435.0 457.5,433.0 458.9,388.7 450.2,390.8" fill="#443b0c"/><polygon points="457.5,433.0 465.9,430.8 467.4,386.5 458.9,388.7" fill="#483e0d"/><polygon points="465.9,430.8 474.2,428.4 475.8,384.2 467.4,386.5" fill="#4c420d"/><polygon points="474.2,428.4 482.4,426.0 484.0,381.8 475.8,384.2" fill="#50450e"/><polygon points="482.4,426.0 490.4,423.3 492.1,379.2 484.0,381.8" fill="#54490f"/><polygon points="490.4,423.3 498.3,420.6 500.1,376.4 492.1,379.2" fill="#584c10"/><polygon points="498.3,420.6 506.0,417.7 507.9,373.6 500.1,376.4" fill="#5c5010"/><polygon points="506.0,417.7 513.6,414.7 515.5,370.6 507.9,373.6" fill="#605311"/><polygon points="513.6,414.7 520.9,411.6 523.0,367.5 515.5,370.6" fill="#645612"/><polygon points="520.9,411.6 528.1,408.3 530.2,364.3 523.0,367.5" fill="#685a12"/><polygon points="528.1,408.3 535.2,404.9 537.3,360.9 530.2,364.3" fill="#6c5d13"/><polygon points="535.2,404.9 542.0,401.4 544.2,357.5 537.3,360.9" fill="#706014"/><polygon points="542.0,401.4 548.6,397.8 550.9,353.9 544.2,357.5" fill="#736414"/><polygon points="548.6,397.8 555.1,394.1 557.4,350.2 550.9,353.9" fill="#776715"/><polygon points="555.1,394.1 561.3,390.3 563.7,346.4 557.4,350.2" fill="#7b6a16"/><polygon points="561.3,390.3 567.3,386.4 569.8,342.6 563.7,346.4" fill="#7e6d16"/><polygon points="567.3,386.4 573.1,382.4 575.6,338.6 569.8,342.6" fill="#827017"/><polygon points="573.1,382.4 578.7,378.3 581.3,334.6 575.6,338.6" fill="#857318"/><polygon points="578.7,378.3 584.0,374.1 586.7,330.4 581.3,334.6" fill="#897618"/><polygon points="584.0,374.1 589.2,369.9 591.9,326.2 586.7,330.4" fill="#8c7919"/><polygon points="589.2,369.9 594.1,365.5 596.8,321.9 591.9,326.2" fill="#8f7c19"/><polygon points="594.1,365.5 598.7,361.1 601.5,317.6 596.8,321.9" fill="#927e1a"/><polygon points="598.7,361.1 603.2,356.7 606.0,313.1 601.5,317.6" fill="#96811a"/><polygon points="603.2,356.7 607.4,352.1 610.3,308.6 606.0,313.1" fill="#99841b"/><polygon points="607.4,352.1 611.3,347.5 614.2,304.1 610.3,308.6" fill="#9c861b"/><polygon points="611.3,347.5 615.0,342.9 618.0,299.5 614.2,304.1" fill="#9e891c"/><polygon points="615.0,342.9 618.5,338.2 621.5,294.8 618.0,299.5" fill="#a18b1c"/><polygon points="618.5,338.2 621.7,333.4 624.7,290.1 621.5,294.8" fill="#a48d1d"/><path fill-rule="evenodd" fill="#fad82c" d="M624.7 290.1 627.7 285.4 630.5 280.6 633.0 275.8 635.2 271.0 637.2 266.1 639.0 261.2 640.4 256.3 641.7 251.4 642.7 246.5 643.4 241.6 643.9 236.7 644.2 231.8 644.2 226.9 643.9 222.0 643.4 217.2 642.7 212.3 641.7 207.5 640.5 202.7 639.1 198.0 637.5 193.3 635.6 188.6 633.5 184.0 631.1 179.4 628.6 174.8 625.8 170.3 622.9 165.9 619.7 161.5 616.3 157.2 612.7 152.9 609.0 148.7 605.0 144.6 600.9 140.5 596.5 136.6 592.0 132.7 587.3 128.8 582.5 125.1 577.5 121.4 572.3 117.8 566.9 114.3 561.4 110.9 555.8 107.6 550.0 104.3 544.1 101.2 538.0 98.2 531.8 95.2 525.5 92.3 519.1 89.6 512.5 86.9 505.8 84.4 499.1 81.9 492.2 79.6 485.2 77.3 478.1 75.2 471.0 73.2 463.7 71.2 456.4 69.4 449.0 67.7 441.6 66.1 434.0 64.6 426.4 63.3 418.8 62.0 411.1 60.9 403.4 59.8 395.6 58.9 387.8 58.1 379.9 57.4 372.1 56.8 364.2 56.3 356.3 56.0 348.3 55.8 340.4 55.6 332.5 55.6 324.5 55.7 316.6 56.0 308.7 56.3 300.8 56.8 292.9 57.3 285.1 58.0 277.3 58.8 269.5 59.7 261.7 60.7 254.0 61.9 246.4 63.1 238.8 64.5 231.3 66.0 223.8 67.5 216.4 69.2 209.1 71.0 201.8 73.0 194.7 75.0 187.6 77.1 180.6 79.3 173.7 81.7 166.9 84.1 160.2 86.6 153.7 89.3 147.2 92.0 140.9 94.9 134.7 97.8 128.6 100.9 122.7 104.0 116.9 107.2 111.2 110.5 105.7 113.9 100.3 117.4 95.1 121.0 90.1 124.7 85.2 128.4 80.5 132.2 76.0 136.1 71.6 140.1 67.4 144.1 63.5 148.3 59.7 152.4 56.1 156.7 52.7 161.0 49.5 165.4 46.5 169.8 43.7 174.3 41.1 178.9 38.8 183.4 36.6 188.1 34.7 192.7 33.1 197.5 31.6 202.2 30.4 207.0 29.4 211.8 28.6 216.6 28.1 221.5 27.9 226.4 27.8 231.3 28.1 236.2 28.5 241.1 29.2 246.0 30.2 250.9 31.4 255.8 32.9 260.7 34.6 265.6 36.5 270.4 38.8 275.3 41.2 280.1 43.9 284.8 46.9 289.6 50.1 294.3 53.6 299.0 57.3 303.6 61.3 308.1 65.5 312.6 69.9 317.1 74.6 321.4 79.6 325.7 84.7 330.0 90.1 334.1 95.7 338.2 101.5 342.1 107.6 346.0 113.9 349.8 120.3 353.5 127.0 357.1 133.9 360.5 141.0 363.9 148.2 367.1 155.7 370.3 163.3 373.3 171.0 376.1 179.0 378.9 187.1 381.5 195.3 384.0 203.7 386.3 212.2 388.5 220.8 390.5 229.6 392.4 238.4 394.2 247.4 395.8 256.4 397.2 265.5 398.5 274.7 399.7 283.9 400.6 293.2 401.4 302.6 402.1 312.0 402.6 321.4 402.9 330.8 403.1 340.2 403.1 349.6 403.0 359.0 402.6 368.4 402.2 377.7 401.5 387.0 400.7 396.3 399.8 405.5 398.7 414.6 397.4 423.6 395.9 432.6 394.4 441.5 392.6 450.2 390.8 458.9 388.7 467.4 386.5 475.8 384.2 484.0 381.8 492.1 379.2 500.1 376.4 507.9 373.6 515.5 370.6 523.0 367.5 530.2 364.3 537.3 360.9 544.2 357.5 550.9 353.9 557.4 350.2 563.7 346.4 569.8 342.6 575.6 338.6 581.3 334.6 586.7 330.4 591.9 326.2 596.8 321.9 601.5 317.6 606.0 313.1 610.3 308.6 614.2 304.1 618.0 299.5 621.5 294.8ZM605.8 285.2 608.8 280.4 611.6 275.6 614.1 270.8 616.3 266.0 618.3 261.1 620.0 256.2 621.4 251.3 622.6 246.4 623.5 241.5 624.1 236.6 624.4 231.7 624.5 226.8 624.3 221.9 623.9 217.0 623.2 212.1 622.3 207.3 621.1 202.5 619.6 197.7 617.9 193.0 616.0 188.3 613.8 183.7 611.4 179.1 608.8 174.5 605.9 170.0 602.8 165.6 599.5 161.3 595.9 157.0 592.2 152.7 588.2 148.6 584.0 144.5 579.7 140.5 575.1 136.6 570.4 132.7 565.5 129.0 560.4 125.3 555.1 121.7 549.6 118.2 544.0 114.9 538.2 111.6 532.3 108.4 526.2 105.3 520.0 102.3 513.7 99.4 507.2 96.6 500.6 94.0 493.8 91.4 487.0 89.0 480.0 86.6 472.9 84.4 465.8 82.3 458.5 80.3 451.2 78.5 443.7 76.7 436.2 75.1 428.6 73.6 421.0 72.2 413.3 70.9 405.5 69.7 397.7 68.7 389.8 67.8 382.0 67.0 374.0 66.4 366.1 65.8 358.1 65.4 350.1 65.1 342.1 65.0 334.1 64.9 326.1 65.0 318.1 65.3 310.1 65.6 302.2 66.1 294.2 66.7 286.3 67.4 278.4 68.2 270.6 69.2 262.8 70.3 255.1 71.5 247.4 72.8 239.8 74.3 232.2 75.8 224.8 77.5 217.4 79.3 210.1 81.3 202.8 83.3 195.7 85.5 188.7 87.7 181.8 90.1 175.0 92.6 168.3 95.2 161.8 97.9 155.3 100.8 149.0 103.7 142.9 106.7 136.9 109.9 131.0 113.1 125.3 116.4 119.8 119.9 114.4 123.4 109.2 127.0 104.2 130.7 99.3 134.5 94.7 138.4 90.2 142.4 86.0 146.4 81.9 150.5 78.0 154.7 74.4 159.0 70.9 163.3 67.7 167.7 64.7 172.2 62.0 176.7 59.4 181.2 57.1 185.9 55.1 190.5 53.2 195.2 51.7 200.0 50.3 204.8 49.2 209.6 48.4 214.4 47.9 219.3 47.5 224.2 47.5 229.1 47.7 234.0 48.2 238.9 48.9 243.8 49.9 248.7 51.2 253.6 52.8 258.5 54.6 263.4 56.7 268.3 59.0 273.1 61.7 277.9 64.6 282.7 67.7 287.4 71.2 292.0 74.9 296.7 78.8 301.2 83.0 305.7 87.5 310.2 92.2 314.5 97.2 318.8 102.4 323.0 107.9 327.1 113.6 331.1 119.6 335.1 125.7 338.9 132.1 342.6 138.8 346.2 145.6 349.7 152.6 353.1 159.8 356.3 167.3 359.4 174.9 362.4 182.7 365.3 190.6 368.0 198.7 370.5 207.0 373.0 215.4 375.2 224.0 377.4 232.6 379.3 241.4 381.1 250.3 382.8 259.3 384.3 268.4 385.6 277.6 386.8 286.8 387.7 296.1 388.6 305.4 389.2 314.7 389.7 324.1 390.0 333.5 390.1 342.9 390.1 352.3 389.9 361.7 389.5 371.0 388.9 380.3 388.2 389.6 387.3 398.8 386.2 407.9 385.0 416.9 383.6 425.9 382.0 434.7 380.3 443.5 378.4 452.1 376.4 460.6 374.2 468.9 371.8 477.1 369.4 485.2 366.7 493.0 363.9 500.7 361.0 508.3 358.0 515.6 354.8 522.7 351.5 529.7 348.1 536.4 344.5 542.9 340.8 549.2 337.1 555.3 333.2 561.1 329.2 566.7 325.2 572.1 321.0 577.2 316.8 582.0 312.5 586.6 308.1 591.0 303.6 595.1 299.1 598.9 294.5 602.5 289.8Z"/><line x1="335.50" y1="257.00" x2="335.50" y2="1.83" stroke="#808080" stroke-width="1"/></g><g stroke-width="1" fill="none" shape-rendering="crispEdges"><path d="M67.5 439V462.5" stroke="#0000ff"/><path d="M67.5 462.5L79 447.7" stroke="#00ff00"/><path d="M67.5 462.5L94 469.8" stroke="#ff0000"/><path d="M64.5 431H70.5L64.5 436.5H70.5M79.5 441.5L82.5 444.5M85.5 441.5L82.5 444.5L79.5 447.5M96.5 468.5L102.5 474.5M102.5 468.5L96.5 474.5" stroke="#000"/></g></svg></div>
<div id="console" class="abs"><div id="ctext" class="abs"><div class="ln" style="top:0px">PolySetCache hit: cylinder($fn=0,$fa=1,$fs=2,h=20,r1=3,r2=</div><div class="ln" style="top:17px">PolySetCache hit: cylinder($fn=0,$fa=1,$fs=2,h=20,r1=3,r2=</div><div class="ln" style="top:34px">PolySetCache hit: cylinder($fn=0,$fa=1,$fs=2,h=20,r1=3,r2=</div><div class="ln" style="top:51px">PolySets in cache: 4</div><div class="ln" style="top:68px">PolySet cache size in bytes: 92784</div><div class="ln" style="top:85px">CGAL Polyhedrons in cache: 0</div><div class="ln" style="top:102px">CGAL cache size in bytes: 0</div><div class="ln" style="top:119px">Compiling design (CSG Products normalization)...</div><div class="ln" style="top:136px">Normalized CSG tree has 146 elements</div><div class="ln" style="top:153px">CSG generation finished.</div><div class="ln" style="top:170px">Total rendering time: 0 hours, 0 minutes, 0 seconds</div></div></div>
<div id="cscroll" class="abs"></div>
<div id="cthumb" class="abs"></div>
<div id="status" class="abs">Viewport: translate = [ 0.00 0.00 0.00 ], rotate = [ 55.00 0.00 25.00 ], distance = 685.87</div>
<div id="taskbar" class="abs"></div>
<div id="lborder" class="abs"></div>
<div class="abs" style="left:604px;top:400px;width:4px;height:1px;background:#a8a8a8;box-shadow:0 3px 0 #a8a8a8,0 6px 0 #a8a8a8"></div>
<svg class="abs" style="left:1268px;top:764px" width="12" height="12"><path d="M11 2V11H2Z" fill="#b4b4b4"/></svg>
<div class="abs" style="left:0;top:776px;width:48px;height:5px;background:linear-gradient(#b7dbf7,#8fc0ea)"></div>
<div class="abs" style="left:16px;top:777px;width:16px;height:10px;border-radius:50%;border:1px solid #2a3f5a;background:#f4f6f8"></div>
<div class="abs" style="left:57px;top:777px;width:19px;height:6px;border-radius:4px 4px 0 0;border:1px solid #9a9a9a;background:#fafafa"></div>
<div class="abs" style="left:84px;top:778px;width:22px;height:6px;border-radius:2px;border:1px solid #2f5a2a;background:linear-gradient(90deg,#1e3a1a,#7fa070)"></div>
<div class="abs" style="left:111px;top:777px;width:22px;height:6px;border-radius:2px;border:1px solid #2a5a8a;background:linear-gradient(90deg,#2050a0,#b8d4f0)"></div>
<div class="abs" style="left:138px;top:777px;width:22px;height:6px;border-radius:2px;border:1px solid #e07010;background:linear-gradient(90deg,#e06a20,#c8b040)"></div>
<div class="abs" style="left:166px;top:777px;width:22px;height:6px;border-radius:2px;border:1px solid #8a8a8a;background:#a8c8e8"></div>
<div class="abs" style="left:195px;top:778px;width:32px;height:4px;border-top:1px solid #3f6f9f;background:#f4f8fc"></div>
<div class="abs" style="left:228px;top:778px;width:32px;height:4px;background:#9c9c9c"></div>
<div class="abs" style="left:271px;top:779px;width:18px;height:4px;border-radius:3px 3px 0 0;background:#f0902a"></div>
<div class="abs" style="left:419px;top:777px;width:146px;height:4px;background:#c4c4c4;border-top:1px solid #b8b8b8"></div>
<div class="abs" style="left:423px;top:779px;width:18px;height:2px;background:#6f90b8"></div>

<div class="abs" style="left:1072px;top:779px;width:2px;height:2px;background:#555"></div>
<div class="abs" style="left:1120px;top:778px;width:3px;height:3px;background:#333"></div>
<div class="abs" style="left:1143px;top:777px;width:9px;height:4px;border:1px solid #444;border-bottom:0;border-radius:3px 3px 0 0"></div>
<div class="abs" style="left:1178px;top:780px;width:5px;height:1px;background:#999"></div>
<div class="abs" style="left:1196px;top:778px;width:7px;height:3px;border:1px solid #bbb;border-bottom:0;border-radius:2px 2px 0 0"></div>
<div class="abs" style="left:1268px;top:778px;width:2px;height:3px;background:#333"></div>
</body></html>
